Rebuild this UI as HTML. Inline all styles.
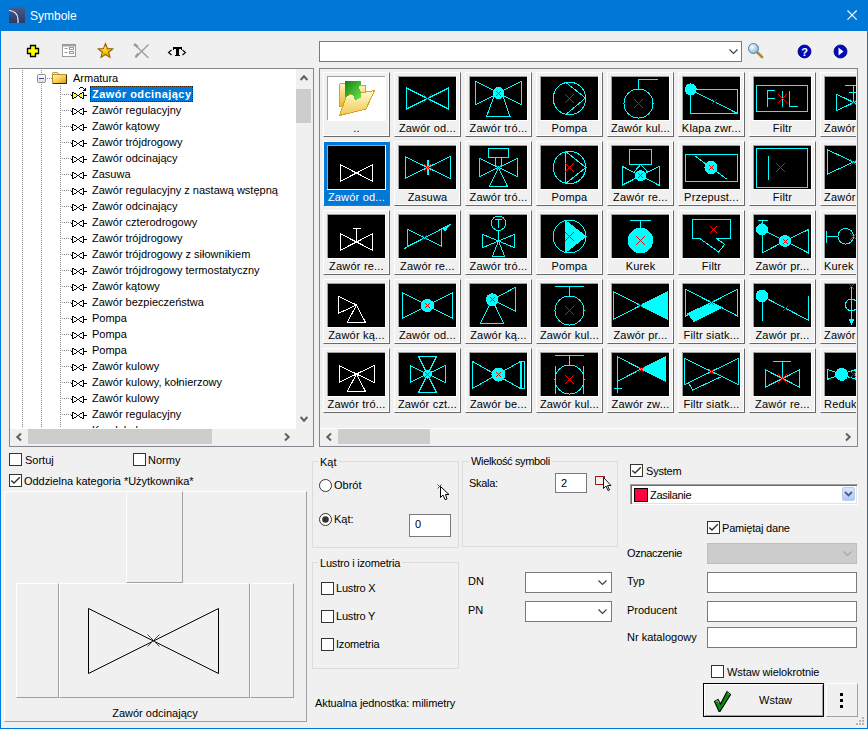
<!DOCTYPE html>
<html><head><meta charset="utf-8"><title>Symbole</title>
<style>
*{box-sizing:border-box;}
html,body{margin:0;padding:0;}
body{width:868px;height:729px;overflow:hidden;position:relative;background:#f0f0f0;font-family:"Liberation Sans", sans-serif;font-size:11px;color:#000;}
.a{position:absolute;}
.t{position:absolute;white-space:nowrap;line-height:13px;}
svg{position:absolute;overflow:visible;}
.cb{position:absolute;width:13px;height:13px;border:1px solid #333;background:#fff;}
.in{position:absolute;border:1px solid #7a7a7a;background:#fff;}
.grp{position:absolute;border:1px solid #dcdcdc;}
.gl{position:absolute;background:#f0f0f0;padding:0 2px;line-height:13px;white-space:nowrap;}
</style></head><body>

<div class="a" style="left:0;top:0;width:868px;height:31px;background:#0078d7;"></div>
<div class="a" style="left:0;top:0;width:1px;height:729px;background:#0078d7;"></div>
<div class="a" style="left:867px;top:0;width:1px;height:729px;background:#0078d7;"></div>
<div class="a" style="left:0;top:728px;width:868px;height:1px;background:#0078d7;"></div>
<svg style="left:9px;top:7px" width="16" height="16"><defs><linearGradient id="tig" x1="0" y1="0" x2="0" y2="1"><stop offset="0" stop-color="#4a5c8a"/><stop offset="1" stop-color="#2b3a66"/></linearGradient></defs>
<rect width="16" height="16" fill="url(#tig)"/><path d="M0,3.5 C5,3.5 9,7 9,12 L9,16" stroke="#fff" stroke-width="1.1" fill="none"/></svg>
<div class="t" style="left:30px;top:9px;font-size:12px;color:#fff;line-height:14px;">Symbole</div>
<svg style="left:847px;top:10px" width="11" height="11"><path d="M0.5,0.5 L9.7,9.7 M9.7,0.5 L0.5,9.7" stroke="#fff" stroke-width="1.1"/></svg>
<svg style="left:26px;top:44px" width="15" height="15"><path d="M4.5,1.5 h5 v3 h3 v5 h-3 v3 h-5 v-3 h-3 v-5 h3 z" fill="#ffff00" stroke="#000" stroke-width="1.3"/></svg>
<svg style="left:62px;top:44px" width="15" height="14"><rect x="0.5" y="0.5" width="13" height="12" fill="#fff" stroke="#9a9a9a"/><rect x="1" y="1" width="12" height="1.5" fill="#a0a0a0"/>
<path d="M2.5,4.5 h3 M2.5,8.5 h3" stroke="#9a9a9a"/><rect x="7.5" y="3.5" width="4" height="2" fill="none" stroke="#9a9a9a"/><rect x="7.5" y="7.5" width="4" height="2" fill="none" stroke="#9a9a9a"/></svg>
<svg style="left:97px;top:43px" width="17" height="16"><defs><linearGradient id="stg" x1="0" y1="0" x2="1" y2="1"><stop offset="0" stop-color="#ffe680"/><stop offset="0.5" stop-color="#f5c400"/><stop offset="1" stop-color="#e0a000"/></linearGradient></defs>
<path d="M8.50,0.60 L10.44,5.53 L15.73,5.85 L11.64,9.22 L12.97,14.35 L8.50,11.50 L4.03,14.35 L5.36,9.22 L1.27,5.85 L6.56,5.53 Z" fill="url(#stg)" stroke="#9a5a00" stroke-width="1.1"/><path d="M8.5,3 L7.5,6.5 L9.5,9" stroke="#fff8c0" stroke-width="1" fill="none" opacity="0.7"/></svg>
<svg style="left:133px;top:43px" width="17" height="16"><path d="M1.5,1.5 L15.5,15" stroke="#999" stroke-width="1.2"/><path d="M15.5,1.5 L2.5,14.5" stroke="#999" stroke-width="1.2"/><path d="M1,1 L5,4" stroke="#999" stroke-width="2.2"/><path d="M5.5,10.5 L2.5,14" stroke="#999" stroke-width="2.2"/></svg>
<svg style="left:166px;top:44px" width="22" height="14"><path d="M5.5,6 L2.5,8.5 L5.5,11" stroke="#000" stroke-width="1.1" fill="none"/><path d="M16.5,6 L19.5,8.5 L16.5,11" stroke="#000" stroke-width="1.1" fill="none"/><path d="M7,3h9v2h-9z M7,3h1v3h-1z M15,3h1v3h-1z M10,3h3v9h-3z M9,11h5v1h-5z" fill="#000" shape-rendering="crispEdges"/></svg>
<div class="a" style="left:9px;top:68px;width:305px;height:379px;border:1px solid #828790;background:#fff;"></div>
<svg style="left:0;top:0" width="868" height="729"><path d="M22,70h1v1h-1zM22,72h1v1h-1zM22,74h1v1h-1zM22,76h1v1h-1zM22,78h1v1h-1zM22,80h1v1h-1zM22,82h1v1h-1zM22,84h1v1h-1zM22,86h1v1h-1zM22,88h1v1h-1zM22,90h1v1h-1zM22,92h1v1h-1zM22,94h1v1h-1zM22,96h1v1h-1zM22,98h1v1h-1zM22,100h1v1h-1zM22,102h1v1h-1zM22,104h1v1h-1zM22,106h1v1h-1zM22,108h1v1h-1zM22,110h1v1h-1zM22,112h1v1h-1zM22,114h1v1h-1zM22,116h1v1h-1zM22,118h1v1h-1zM22,120h1v1h-1zM22,122h1v1h-1zM22,124h1v1h-1zM22,126h1v1h-1zM22,128h1v1h-1zM22,130h1v1h-1zM22,132h1v1h-1zM22,134h1v1h-1zM22,136h1v1h-1zM22,138h1v1h-1zM22,140h1v1h-1zM22,142h1v1h-1zM22,144h1v1h-1zM22,146h1v1h-1zM22,148h1v1h-1zM22,150h1v1h-1zM22,152h1v1h-1zM22,154h1v1h-1zM22,156h1v1h-1zM22,158h1v1h-1zM22,160h1v1h-1zM22,162h1v1h-1zM22,164h1v1h-1zM22,166h1v1h-1zM22,168h1v1h-1zM22,170h1v1h-1zM22,172h1v1h-1zM22,174h1v1h-1zM22,176h1v1h-1zM22,178h1v1h-1zM22,180h1v1h-1zM22,182h1v1h-1zM22,184h1v1h-1zM22,186h1v1h-1zM22,188h1v1h-1zM22,190h1v1h-1zM22,192h1v1h-1zM22,194h1v1h-1zM22,196h1v1h-1zM22,198h1v1h-1zM22,200h1v1h-1zM22,202h1v1h-1zM22,204h1v1h-1zM22,206h1v1h-1zM22,208h1v1h-1zM22,210h1v1h-1zM22,212h1v1h-1zM22,214h1v1h-1zM22,216h1v1h-1zM22,218h1v1h-1zM22,220h1v1h-1zM22,222h1v1h-1zM22,224h1v1h-1zM22,226h1v1h-1zM22,228h1v1h-1zM22,230h1v1h-1zM22,232h1v1h-1zM22,234h1v1h-1zM22,236h1v1h-1zM22,238h1v1h-1zM22,240h1v1h-1zM22,242h1v1h-1zM22,244h1v1h-1zM22,246h1v1h-1zM22,248h1v1h-1zM22,250h1v1h-1zM22,252h1v1h-1zM22,254h1v1h-1zM22,256h1v1h-1zM22,258h1v1h-1zM22,260h1v1h-1zM22,262h1v1h-1zM22,264h1v1h-1zM22,266h1v1h-1zM22,268h1v1h-1zM22,270h1v1h-1zM22,272h1v1h-1zM22,274h1v1h-1zM22,276h1v1h-1zM22,278h1v1h-1zM22,280h1v1h-1zM22,282h1v1h-1zM22,284h1v1h-1zM22,286h1v1h-1zM22,288h1v1h-1zM22,290h1v1h-1zM22,292h1v1h-1zM22,294h1v1h-1zM22,296h1v1h-1zM22,298h1v1h-1zM22,300h1v1h-1zM22,302h1v1h-1zM22,304h1v1h-1zM22,306h1v1h-1zM22,308h1v1h-1zM22,310h1v1h-1zM22,312h1v1h-1zM22,314h1v1h-1zM22,316h1v1h-1zM22,318h1v1h-1zM22,320h1v1h-1zM22,322h1v1h-1zM22,324h1v1h-1zM22,326h1v1h-1zM22,328h1v1h-1zM22,330h1v1h-1zM22,332h1v1h-1zM22,334h1v1h-1zM22,336h1v1h-1zM22,338h1v1h-1zM22,340h1v1h-1zM22,342h1v1h-1zM22,344h1v1h-1zM22,346h1v1h-1zM22,348h1v1h-1zM22,350h1v1h-1zM22,352h1v1h-1zM22,354h1v1h-1zM22,356h1v1h-1zM22,358h1v1h-1zM22,360h1v1h-1zM22,362h1v1h-1zM22,364h1v1h-1zM22,366h1v1h-1zM22,368h1v1h-1zM22,370h1v1h-1zM22,372h1v1h-1zM22,374h1v1h-1zM22,376h1v1h-1zM22,378h1v1h-1zM22,380h1v1h-1zM22,382h1v1h-1zM22,384h1v1h-1zM22,386h1v1h-1zM22,388h1v1h-1zM22,390h1v1h-1zM22,392h1v1h-1zM22,394h1v1h-1zM22,396h1v1h-1zM22,398h1v1h-1zM22,400h1v1h-1zM22,402h1v1h-1zM22,404h1v1h-1zM22,406h1v1h-1zM22,408h1v1h-1zM22,410h1v1h-1zM22,412h1v1h-1zM22,414h1v1h-1zM22,416h1v1h-1zM22,418h1v1h-1zM22,420h1v1h-1zM22,422h1v1h-1zM22,424h1v1h-1zM22,426h1v1h-1zM41,70h1v1h-1zM41,72h1v1h-1zM41,84h1v1h-1zM41,86h1v1h-1zM41,88h1v1h-1zM41,90h1v1h-1zM41,92h1v1h-1zM41,94h1v1h-1zM41,96h1v1h-1zM41,98h1v1h-1zM41,100h1v1h-1zM41,102h1v1h-1zM41,104h1v1h-1zM41,106h1v1h-1zM41,108h1v1h-1zM41,110h1v1h-1zM41,112h1v1h-1zM41,114h1v1h-1zM41,116h1v1h-1zM41,118h1v1h-1zM41,120h1v1h-1zM41,122h1v1h-1zM41,124h1v1h-1zM41,126h1v1h-1zM41,128h1v1h-1zM41,130h1v1h-1zM41,132h1v1h-1zM41,134h1v1h-1zM41,136h1v1h-1zM41,138h1v1h-1zM41,140h1v1h-1zM41,142h1v1h-1zM41,144h1v1h-1zM41,146h1v1h-1zM41,148h1v1h-1zM41,150h1v1h-1zM41,152h1v1h-1zM41,154h1v1h-1zM41,156h1v1h-1zM41,158h1v1h-1zM41,160h1v1h-1zM41,162h1v1h-1zM41,164h1v1h-1zM41,166h1v1h-1zM41,168h1v1h-1zM41,170h1v1h-1zM41,172h1v1h-1zM41,174h1v1h-1zM41,176h1v1h-1zM41,178h1v1h-1zM41,180h1v1h-1zM41,182h1v1h-1zM41,184h1v1h-1zM41,186h1v1h-1zM41,188h1v1h-1zM41,190h1v1h-1zM41,192h1v1h-1zM41,194h1v1h-1zM41,196h1v1h-1zM41,198h1v1h-1zM41,200h1v1h-1zM41,202h1v1h-1zM41,204h1v1h-1zM41,206h1v1h-1zM41,208h1v1h-1zM41,210h1v1h-1zM41,212h1v1h-1zM41,214h1v1h-1zM41,216h1v1h-1zM41,218h1v1h-1zM41,220h1v1h-1zM41,222h1v1h-1zM41,224h1v1h-1zM41,226h1v1h-1zM41,228h1v1h-1zM41,230h1v1h-1zM41,232h1v1h-1zM41,234h1v1h-1zM41,236h1v1h-1zM41,238h1v1h-1zM41,240h1v1h-1zM41,242h1v1h-1zM41,244h1v1h-1zM41,246h1v1h-1zM41,248h1v1h-1zM41,250h1v1h-1zM41,252h1v1h-1zM41,254h1v1h-1zM41,256h1v1h-1zM41,258h1v1h-1zM41,260h1v1h-1zM41,262h1v1h-1zM41,264h1v1h-1zM41,266h1v1h-1zM41,268h1v1h-1zM41,270h1v1h-1zM41,272h1v1h-1zM41,274h1v1h-1zM41,276h1v1h-1zM41,278h1v1h-1zM41,280h1v1h-1zM41,282h1v1h-1zM41,284h1v1h-1zM41,286h1v1h-1zM41,288h1v1h-1zM41,290h1v1h-1zM41,292h1v1h-1zM41,294h1v1h-1zM41,296h1v1h-1zM41,298h1v1h-1zM41,300h1v1h-1zM41,302h1v1h-1zM41,304h1v1h-1zM41,306h1v1h-1zM41,308h1v1h-1zM41,310h1v1h-1zM41,312h1v1h-1zM41,314h1v1h-1zM41,316h1v1h-1zM41,318h1v1h-1zM41,320h1v1h-1zM41,322h1v1h-1zM41,324h1v1h-1zM41,326h1v1h-1zM41,328h1v1h-1zM41,330h1v1h-1zM41,332h1v1h-1zM41,334h1v1h-1zM41,336h1v1h-1zM41,338h1v1h-1zM41,340h1v1h-1zM41,342h1v1h-1zM41,344h1v1h-1zM41,346h1v1h-1zM41,348h1v1h-1zM41,350h1v1h-1zM41,352h1v1h-1zM41,354h1v1h-1zM41,356h1v1h-1zM41,358h1v1h-1zM41,360h1v1h-1zM41,362h1v1h-1zM41,364h1v1h-1zM41,366h1v1h-1zM41,368h1v1h-1zM41,370h1v1h-1zM41,372h1v1h-1zM41,374h1v1h-1zM41,376h1v1h-1zM41,378h1v1h-1zM41,380h1v1h-1zM41,382h1v1h-1zM41,384h1v1h-1zM41,386h1v1h-1zM41,388h1v1h-1zM41,390h1v1h-1zM41,392h1v1h-1zM41,394h1v1h-1zM41,396h1v1h-1zM41,398h1v1h-1zM41,400h1v1h-1zM41,402h1v1h-1zM41,404h1v1h-1zM41,406h1v1h-1zM41,408h1v1h-1zM41,410h1v1h-1zM41,412h1v1h-1zM41,414h1v1h-1zM41,416h1v1h-1zM41,418h1v1h-1zM41,420h1v1h-1zM41,422h1v1h-1zM41,424h1v1h-1zM41,426h1v1h-1zM47,78h1v1h-1zM49,78h1v1h-1zM51,78h1v1h-1zM60,86h1v1h-1zM60,88h1v1h-1zM60,90h1v1h-1zM60,92h1v1h-1zM60,94h1v1h-1zM60,96h1v1h-1zM60,98h1v1h-1zM60,100h1v1h-1zM60,102h1v1h-1zM60,104h1v1h-1zM60,106h1v1h-1zM60,108h1v1h-1zM60,110h1v1h-1zM60,112h1v1h-1zM60,114h1v1h-1zM60,116h1v1h-1zM60,118h1v1h-1zM60,120h1v1h-1zM60,122h1v1h-1zM60,124h1v1h-1zM60,126h1v1h-1zM60,128h1v1h-1zM60,130h1v1h-1zM60,132h1v1h-1zM60,134h1v1h-1zM60,136h1v1h-1zM60,138h1v1h-1zM60,140h1v1h-1zM60,142h1v1h-1zM60,144h1v1h-1zM60,146h1v1h-1zM60,148h1v1h-1zM60,150h1v1h-1zM60,152h1v1h-1zM60,154h1v1h-1zM60,156h1v1h-1zM60,158h1v1h-1zM60,160h1v1h-1zM60,162h1v1h-1zM60,164h1v1h-1zM60,166h1v1h-1zM60,168h1v1h-1zM60,170h1v1h-1zM60,172h1v1h-1zM60,174h1v1h-1zM60,176h1v1h-1zM60,178h1v1h-1zM60,180h1v1h-1zM60,182h1v1h-1zM60,184h1v1h-1zM60,186h1v1h-1zM60,188h1v1h-1zM60,190h1v1h-1zM60,192h1v1h-1zM60,194h1v1h-1zM60,196h1v1h-1zM60,198h1v1h-1zM60,200h1v1h-1zM60,202h1v1h-1zM60,204h1v1h-1zM60,206h1v1h-1zM60,208h1v1h-1zM60,210h1v1h-1zM60,212h1v1h-1zM60,214h1v1h-1zM60,216h1v1h-1zM60,218h1v1h-1zM60,220h1v1h-1zM60,222h1v1h-1zM60,224h1v1h-1zM60,226h1v1h-1zM60,228h1v1h-1zM60,230h1v1h-1zM60,232h1v1h-1zM60,234h1v1h-1zM60,236h1v1h-1zM60,238h1v1h-1zM60,240h1v1h-1zM60,242h1v1h-1zM60,244h1v1h-1zM60,246h1v1h-1zM60,248h1v1h-1zM60,250h1v1h-1zM60,252h1v1h-1zM60,254h1v1h-1zM60,256h1v1h-1zM60,258h1v1h-1zM60,260h1v1h-1zM60,262h1v1h-1zM60,264h1v1h-1zM60,266h1v1h-1zM60,268h1v1h-1zM60,270h1v1h-1zM60,272h1v1h-1zM60,274h1v1h-1zM60,276h1v1h-1zM60,278h1v1h-1zM60,280h1v1h-1zM60,282h1v1h-1zM60,284h1v1h-1zM60,286h1v1h-1zM60,288h1v1h-1zM60,290h1v1h-1zM60,292h1v1h-1zM60,294h1v1h-1zM60,296h1v1h-1zM60,298h1v1h-1zM60,300h1v1h-1zM60,302h1v1h-1zM60,304h1v1h-1zM60,306h1v1h-1zM60,308h1v1h-1zM60,310h1v1h-1zM60,312h1v1h-1zM60,314h1v1h-1zM60,316h1v1h-1zM60,318h1v1h-1zM60,320h1v1h-1zM60,322h1v1h-1zM60,324h1v1h-1zM60,326h1v1h-1zM60,328h1v1h-1zM60,330h1v1h-1zM60,332h1v1h-1zM60,334h1v1h-1zM60,336h1v1h-1zM60,338h1v1h-1zM60,340h1v1h-1zM60,342h1v1h-1zM60,344h1v1h-1zM60,346h1v1h-1zM60,348h1v1h-1zM60,350h1v1h-1zM60,352h1v1h-1zM60,354h1v1h-1zM60,356h1v1h-1zM60,358h1v1h-1zM60,360h1v1h-1zM60,362h1v1h-1zM60,364h1v1h-1zM60,366h1v1h-1zM60,368h1v1h-1zM60,370h1v1h-1zM60,372h1v1h-1zM60,374h1v1h-1zM60,376h1v1h-1zM60,378h1v1h-1zM60,380h1v1h-1zM60,382h1v1h-1zM60,384h1v1h-1zM60,386h1v1h-1zM60,388h1v1h-1zM60,390h1v1h-1zM60,392h1v1h-1zM60,394h1v1h-1zM60,396h1v1h-1zM60,398h1v1h-1zM60,400h1v1h-1zM60,402h1v1h-1zM60,404h1v1h-1zM60,406h1v1h-1zM60,408h1v1h-1zM60,410h1v1h-1zM60,412h1v1h-1zM60,414h1v1h-1zM60,416h1v1h-1zM60,418h1v1h-1zM60,420h1v1h-1zM60,422h1v1h-1zM60,424h1v1h-1zM60,426h1v1h-1zM62,94h1v1h-1zM64,94h1v1h-1zM66,94h1v1h-1zM68,94h1v1h-1zM70,94h1v1h-1zM62,110h1v1h-1zM64,110h1v1h-1zM66,110h1v1h-1zM68,110h1v1h-1zM70,110h1v1h-1zM62,126h1v1h-1zM64,126h1v1h-1zM66,126h1v1h-1zM68,126h1v1h-1zM70,126h1v1h-1zM62,142h1v1h-1zM64,142h1v1h-1zM66,142h1v1h-1zM68,142h1v1h-1zM70,142h1v1h-1zM62,158h1v1h-1zM64,158h1v1h-1zM66,158h1v1h-1zM68,158h1v1h-1zM70,158h1v1h-1zM62,174h1v1h-1zM64,174h1v1h-1zM66,174h1v1h-1zM68,174h1v1h-1zM70,174h1v1h-1zM62,190h1v1h-1zM64,190h1v1h-1zM66,190h1v1h-1zM68,190h1v1h-1zM70,190h1v1h-1zM62,206h1v1h-1zM64,206h1v1h-1zM66,206h1v1h-1zM68,206h1v1h-1zM70,206h1v1h-1zM62,222h1v1h-1zM64,222h1v1h-1zM66,222h1v1h-1zM68,222h1v1h-1zM70,222h1v1h-1zM62,238h1v1h-1zM64,238h1v1h-1zM66,238h1v1h-1zM68,238h1v1h-1zM70,238h1v1h-1zM62,254h1v1h-1zM64,254h1v1h-1zM66,254h1v1h-1zM68,254h1v1h-1zM70,254h1v1h-1zM62,270h1v1h-1zM64,270h1v1h-1zM66,270h1v1h-1zM68,270h1v1h-1zM70,270h1v1h-1zM62,286h1v1h-1zM64,286h1v1h-1zM66,286h1v1h-1zM68,286h1v1h-1zM70,286h1v1h-1zM62,302h1v1h-1zM64,302h1v1h-1zM66,302h1v1h-1zM68,302h1v1h-1zM70,302h1v1h-1zM62,318h1v1h-1zM64,318h1v1h-1zM66,318h1v1h-1zM68,318h1v1h-1zM70,318h1v1h-1zM62,334h1v1h-1zM64,334h1v1h-1zM66,334h1v1h-1zM68,334h1v1h-1zM70,334h1v1h-1zM62,350h1v1h-1zM64,350h1v1h-1zM66,350h1v1h-1zM68,350h1v1h-1zM70,350h1v1h-1zM62,366h1v1h-1zM64,366h1v1h-1zM66,366h1v1h-1zM68,366h1v1h-1zM70,366h1v1h-1zM62,382h1v1h-1zM64,382h1v1h-1zM66,382h1v1h-1zM68,382h1v1h-1zM70,382h1v1h-1zM62,398h1v1h-1zM64,398h1v1h-1zM66,398h1v1h-1zM68,398h1v1h-1zM70,398h1v1h-1zM62,414h1v1h-1zM64,414h1v1h-1zM66,414h1v1h-1zM68,414h1v1h-1zM70,414h1v1h-1zM62,430h1v1h-1zM64,430h1v1h-1zM66,430h1v1h-1zM68,430h1v1h-1zM70,430h1v1h-1z" fill="#8a8a8a"/></svg>
<div class="a" style="left:10px;top:69px;width:286px;height:359px;overflow:hidden;">
<svg style="left:27px;top:5px" width="9" height="9"><defs><linearGradient id="exg" x1="0" y1="0" x2="0" y2="1"><stop offset="0" stop-color="#fff"/><stop offset="1" stop-color="#dcdcdc"/></linearGradient></defs><rect x="0.5" y="0.5" width="8" height="8" rx="1.2" fill="url(#exg)" stroke="#8e8f8f"/><path d="M2,4.5h5" stroke="#3c4fa0" stroke-width="1"/></svg>
<svg style="left:42px;top:3px" width="16" height="13"><defs><linearGradient id="fdg" x1="0" y1="0" x2="1" y2="1"><stop offset="0" stop-color="#fff6b8"/><stop offset="0.55" stop-color="#f3cc50"/><stop offset="1" stop-color="#d89a10"/></linearGradient></defs><path d="M0.5,2.5 V1 Q0.5,0.5 1,0.5 H5.5 L7,2.5" fill="#fbe9a0" stroke="#c8a040"/><rect x="0.5" y="2.5" width="14" height="9" fill="url(#fdg)" stroke="#b89030"/><path d="M1,11.5 H14.5 V3" stroke="#3a2800" fill="none"/></svg>
<div class="t" style="left:63px;top:1px;line-height:16px;">Armatura</div>
<div class="a" style="left:80px;top:17px;width:103px;height:16px;background:#0078d7;outline:1px dotted #402000;outline-offset:-1px;"></div>
<div class="t" style="left:82px;top:17px;line-height:16px;font-weight:bold;color:#fff;letter-spacing:0.45px;">Zawór odcinający</div>
<div class="t" style="left:82px;top:33px;line-height:16px;">Zawór regulacyjny</div>
<div class="t" style="left:82px;top:49px;line-height:16px;">Zawór kątowy</div>
<div class="t" style="left:82px;top:65px;line-height:16px;">Zawór trójdrogowy</div>
<div class="t" style="left:82px;top:81px;line-height:16px;">Zawór odcinający</div>
<div class="t" style="left:82px;top:97px;line-height:16px;">Zasuwa</div>
<div class="t" style="left:82px;top:113px;line-height:16px;">Zawór regulacyjny z nastawą wstępną</div>
<div class="t" style="left:82px;top:129px;line-height:16px;">Zawór odcinający</div>
<div class="t" style="left:82px;top:145px;line-height:16px;">Zawór czterodrogowy</div>
<div class="t" style="left:82px;top:161px;line-height:16px;">Zawór trójdrogowy</div>
<div class="t" style="left:82px;top:177px;line-height:16px;">Zawór trójdrogowy z siłownikiem</div>
<div class="t" style="left:82px;top:193px;line-height:16px;">Zawór trójdrogowy termostatyczny</div>
<div class="t" style="left:82px;top:209px;line-height:16px;">Zawór kątowy</div>
<div class="t" style="left:82px;top:225px;line-height:16px;">Zawór bezpieczeństwa</div>
<div class="t" style="left:82px;top:241px;line-height:16px;">Pompa</div>
<div class="t" style="left:82px;top:257px;line-height:16px;">Pompa</div>
<div class="t" style="left:82px;top:273px;line-height:16px;">Pompa</div>
<div class="t" style="left:82px;top:289px;line-height:16px;">Zawór kulowy</div>
<div class="t" style="left:82px;top:305px;line-height:16px;">Zawór kulowy, kołnierzowy</div>
<div class="t" style="left:82px;top:321px;line-height:16px;">Zawór kulowy</div>
<div class="t" style="left:82px;top:337px;line-height:16px;">Zawór regulacyjny</div>
<div class="t" style="left:82px;top:353px;line-height:16px;">Kurek kulowy</div>
<svg style="left:0;top:0" width="286" height="360" shape-rendering="crispEdges"><path d="M63,24h1v1h2v1h1v1h-1v1h-2v1h-1z M72,24h-1v1h-2v1h-1v1h1v1h2v1h1z" fill="#ffff00"/><path d="M64,26h1v1h-1z M70,26h1v1h-1z" fill="#ffffa0"/><path d="M61,26h1v1h-1zM62,23h1v7h-1zM63,23h1v1h-1zM63,29h1v1h-1zM64,24h2v1h-2zM66,25h1v1h-1zM67,26h2v1h-2zM66,27h1v1h-1zM64,28h2v1h-2zM69,25h1v1h-1zM70,24h2v1h-2zM69,27h1v1h-1zM70,28h2v1h-2zM73,23h1v7h-1zM72,23h1v1h-1zM72,29h1v1h-1zM74,26h3v1h-3z" fill="#000"/><path d="M69,19h1v1h-1z M70,18h3v1h-3z M73,19h1v1h-1z M75,19h1v3h-1z M74,20h1v2h-1z M73,21h1v1h-1z" fill="#000"/><path d="M61,42h1v1h-1zM62,39h1v7h-1zM63,39h1v1h-1zM63,45h1v1h-1zM64,40h2v1h-2zM66,41h1v1h-1zM67,42h2v1h-2zM66,43h1v1h-1zM64,44h2v1h-2zM69,41h1v1h-1zM70,40h2v1h-2zM69,43h1v1h-1zM70,44h2v1h-2zM73,39h1v7h-1zM72,39h1v1h-1zM72,45h1v1h-1zM74,42h3v1h-3z" fill="#000"/><path d="M61,58h1v1h-1zM62,55h1v7h-1zM63,55h1v1h-1zM63,61h1v1h-1zM64,56h2v1h-2zM66,57h1v1h-1zM67,58h2v1h-2zM66,59h1v1h-1zM64,60h2v1h-2zM69,57h1v1h-1zM70,56h2v1h-2zM69,59h1v1h-1zM70,60h2v1h-2zM73,55h1v7h-1zM72,55h1v1h-1zM72,61h1v1h-1zM74,58h3v1h-3z" fill="#000"/><path d="M61,74h1v1h-1zM62,71h1v7h-1zM63,71h1v1h-1zM63,77h1v1h-1zM64,72h2v1h-2zM66,73h1v1h-1zM67,74h2v1h-2zM66,75h1v1h-1zM64,76h2v1h-2zM69,73h1v1h-1zM70,72h2v1h-2zM69,75h1v1h-1zM70,76h2v1h-2zM73,71h1v7h-1zM72,71h1v1h-1zM72,77h1v1h-1zM74,74h3v1h-3z" fill="#000"/><path d="M61,90h1v1h-1zM62,87h1v7h-1zM63,87h1v1h-1zM63,93h1v1h-1zM64,88h2v1h-2zM66,89h1v1h-1zM67,90h2v1h-2zM66,91h1v1h-1zM64,92h2v1h-2zM69,89h1v1h-1zM70,88h2v1h-2zM69,91h1v1h-1zM70,92h2v1h-2zM73,87h1v7h-1zM72,87h1v1h-1zM72,93h1v1h-1zM74,90h3v1h-3z" fill="#000"/><path d="M61,106h1v1h-1zM62,103h1v7h-1zM63,103h1v1h-1zM63,109h1v1h-1zM64,104h2v1h-2zM66,105h1v1h-1zM67,106h2v1h-2zM66,107h1v1h-1zM64,108h2v1h-2zM69,105h1v1h-1zM70,104h2v1h-2zM69,107h1v1h-1zM70,108h2v1h-2zM73,103h1v7h-1zM72,103h1v1h-1zM72,109h1v1h-1zM74,106h3v1h-3z" fill="#000"/><path d="M61,122h1v1h-1zM62,119h1v7h-1zM63,119h1v1h-1zM63,125h1v1h-1zM64,120h2v1h-2zM66,121h1v1h-1zM67,122h2v1h-2zM66,123h1v1h-1zM64,124h2v1h-2zM69,121h1v1h-1zM70,120h2v1h-2zM69,123h1v1h-1zM70,124h2v1h-2zM73,119h1v7h-1zM72,119h1v1h-1zM72,125h1v1h-1zM74,122h3v1h-3z" fill="#000"/><path d="M61,138h1v1h-1zM62,135h1v7h-1zM63,135h1v1h-1zM63,141h1v1h-1zM64,136h2v1h-2zM66,137h1v1h-1zM67,138h2v1h-2zM66,139h1v1h-1zM64,140h2v1h-2zM69,137h1v1h-1zM70,136h2v1h-2zM69,139h1v1h-1zM70,140h2v1h-2zM73,135h1v7h-1zM72,135h1v1h-1zM72,141h1v1h-1zM74,138h3v1h-3z" fill="#000"/><path d="M61,154h1v1h-1zM62,151h1v7h-1zM63,151h1v1h-1zM63,157h1v1h-1zM64,152h2v1h-2zM66,153h1v1h-1zM67,154h2v1h-2zM66,155h1v1h-1zM64,156h2v1h-2zM69,153h1v1h-1zM70,152h2v1h-2zM69,155h1v1h-1zM70,156h2v1h-2zM73,151h1v7h-1zM72,151h1v1h-1zM72,157h1v1h-1zM74,154h3v1h-3z" fill="#000"/><path d="M61,170h1v1h-1zM62,167h1v7h-1zM63,167h1v1h-1zM63,173h1v1h-1zM64,168h2v1h-2zM66,169h1v1h-1zM67,170h2v1h-2zM66,171h1v1h-1zM64,172h2v1h-2zM69,169h1v1h-1zM70,168h2v1h-2zM69,171h1v1h-1zM70,172h2v1h-2zM73,167h1v7h-1zM72,167h1v1h-1zM72,173h1v1h-1zM74,170h3v1h-3z" fill="#000"/><path d="M61,186h1v1h-1zM62,183h1v7h-1zM63,183h1v1h-1zM63,189h1v1h-1zM64,184h2v1h-2zM66,185h1v1h-1zM67,186h2v1h-2zM66,187h1v1h-1zM64,188h2v1h-2zM69,185h1v1h-1zM70,184h2v1h-2zM69,187h1v1h-1zM70,188h2v1h-2zM73,183h1v7h-1zM72,183h1v1h-1zM72,189h1v1h-1zM74,186h3v1h-3z" fill="#000"/><path d="M61,202h1v1h-1zM62,199h1v7h-1zM63,199h1v1h-1zM63,205h1v1h-1zM64,200h2v1h-2zM66,201h1v1h-1zM67,202h2v1h-2zM66,203h1v1h-1zM64,204h2v1h-2zM69,201h1v1h-1zM70,200h2v1h-2zM69,203h1v1h-1zM70,204h2v1h-2zM73,199h1v7h-1zM72,199h1v1h-1zM72,205h1v1h-1zM74,202h3v1h-3z" fill="#000"/><path d="M61,218h1v1h-1zM62,215h1v7h-1zM63,215h1v1h-1zM63,221h1v1h-1zM64,216h2v1h-2zM66,217h1v1h-1zM67,218h2v1h-2zM66,219h1v1h-1zM64,220h2v1h-2zM69,217h1v1h-1zM70,216h2v1h-2zM69,219h1v1h-1zM70,220h2v1h-2zM73,215h1v7h-1zM72,215h1v1h-1zM72,221h1v1h-1zM74,218h3v1h-3z" fill="#000"/><path d="M61,234h1v1h-1zM62,231h1v7h-1zM63,231h1v1h-1zM63,237h1v1h-1zM64,232h2v1h-2zM66,233h1v1h-1zM67,234h2v1h-2zM66,235h1v1h-1zM64,236h2v1h-2zM69,233h1v1h-1zM70,232h2v1h-2zM69,235h1v1h-1zM70,236h2v1h-2zM73,231h1v7h-1zM72,231h1v1h-1zM72,237h1v1h-1zM74,234h3v1h-3z" fill="#000"/><path d="M61,250h1v1h-1zM62,247h1v7h-1zM63,247h1v1h-1zM63,253h1v1h-1zM64,248h2v1h-2zM66,249h1v1h-1zM67,250h2v1h-2zM66,251h1v1h-1zM64,252h2v1h-2zM69,249h1v1h-1zM70,248h2v1h-2zM69,251h1v1h-1zM70,252h2v1h-2zM73,247h1v7h-1zM72,247h1v1h-1zM72,253h1v1h-1zM74,250h3v1h-3z" fill="#000"/><path d="M61,266h1v1h-1zM62,263h1v7h-1zM63,263h1v1h-1zM63,269h1v1h-1zM64,264h2v1h-2zM66,265h1v1h-1zM67,266h2v1h-2zM66,267h1v1h-1zM64,268h2v1h-2zM69,265h1v1h-1zM70,264h2v1h-2zM69,267h1v1h-1zM70,268h2v1h-2zM73,263h1v7h-1zM72,263h1v1h-1zM72,269h1v1h-1zM74,266h3v1h-3z" fill="#000"/><path d="M61,282h1v1h-1zM62,279h1v7h-1zM63,279h1v1h-1zM63,285h1v1h-1zM64,280h2v1h-2zM66,281h1v1h-1zM67,282h2v1h-2zM66,283h1v1h-1zM64,284h2v1h-2zM69,281h1v1h-1zM70,280h2v1h-2zM69,283h1v1h-1zM70,284h2v1h-2zM73,279h1v7h-1zM72,279h1v1h-1zM72,285h1v1h-1zM74,282h3v1h-3z" fill="#000"/><path d="M61,298h1v1h-1zM62,295h1v7h-1zM63,295h1v1h-1zM63,301h1v1h-1zM64,296h2v1h-2zM66,297h1v1h-1zM67,298h2v1h-2zM66,299h1v1h-1zM64,300h2v1h-2zM69,297h1v1h-1zM70,296h2v1h-2zM69,299h1v1h-1zM70,300h2v1h-2zM73,295h1v7h-1zM72,295h1v1h-1zM72,301h1v1h-1zM74,298h3v1h-3z" fill="#000"/><path d="M61,314h1v1h-1zM62,311h1v7h-1zM63,311h1v1h-1zM63,317h1v1h-1zM64,312h2v1h-2zM66,313h1v1h-1zM67,314h2v1h-2zM66,315h1v1h-1zM64,316h2v1h-2zM69,313h1v1h-1zM70,312h2v1h-2zM69,315h1v1h-1zM70,316h2v1h-2zM73,311h1v7h-1zM72,311h1v1h-1zM72,317h1v1h-1zM74,314h3v1h-3z" fill="#000"/><path d="M61,330h1v1h-1zM62,327h1v7h-1zM63,327h1v1h-1zM63,333h1v1h-1zM64,328h2v1h-2zM66,329h1v1h-1zM67,330h2v1h-2zM66,331h1v1h-1zM64,332h2v1h-2zM69,329h1v1h-1zM70,328h2v1h-2zM69,331h1v1h-1zM70,332h2v1h-2zM73,327h1v7h-1zM72,327h1v1h-1zM72,333h1v1h-1zM74,330h3v1h-3z" fill="#000"/><path d="M61,346h1v1h-1zM62,343h1v7h-1zM63,343h1v1h-1zM63,349h1v1h-1zM64,344h2v1h-2zM66,345h1v1h-1zM67,346h2v1h-2zM66,347h1v1h-1zM64,348h2v1h-2zM69,345h1v1h-1zM70,344h2v1h-2zM69,347h1v1h-1zM70,348h2v1h-2zM73,343h1v7h-1zM72,343h1v1h-1zM72,349h1v1h-1zM74,346h3v1h-3z" fill="#000"/><path d="M61,362h1v1h-1zM62,359h1v7h-1zM63,359h1v1h-1zM63,365h1v1h-1zM64,360h2v1h-2zM66,361h1v1h-1zM67,362h2v1h-2zM66,363h1v1h-1zM64,364h2v1h-2zM69,361h1v1h-1zM70,360h2v1h-2zM69,363h1v1h-1zM70,364h2v1h-2zM73,359h1v7h-1zM72,359h1v1h-1zM72,365h1v1h-1zM74,362h3v1h-3z" fill="#000"/></svg>
</div>
<div class="a" style="left:296px;top:69px;width:17px;height:360px;background:#f0f0f0;"></div>
<div class="a" style="left:296px;top:89px;width:15px;height:34px;background:#cdcdcd;"></div>
<svg style="left:299px;top:74px" width="10" height="7"><path d="M1.6,6 L5,2.3 L8.4,6" stroke="#606060" stroke-width="2" fill="none"/></svg>
<svg style="left:299px;top:416px" width="10" height="7"><path d="M1.6,1 L5,4.7 L8.4,1" stroke="#606060" stroke-width="2" fill="none"/></svg>
<div class="a" style="left:10px;top:429px;width:303px;height:17px;background:#f0f0f0;"></div>
<div class="a" style="left:28px;top:429px;width:184px;height:15px;background:#cdcdcd;"></div>
<svg style="left:15px;top:432px" width="7" height="10"><path d="M6,1.6 L2.3,5 L6,8.4" stroke="#606060" stroke-width="2" fill="none"/></svg>
<svg style="left:284px;top:432px" width="7" height="10"><path d="M1,1.6 L4.7,5 L1,8.4" stroke="#606060" stroke-width="2" fill="none"/></svg>
<div class="a" style="left:319px;top:68px;width:539px;height:379px;border:1px solid #828790;background:#f0f0f0;"></div>
<div class="a" style="left:320px;top:69px;width:536px;height:359px;overflow:hidden;">
<div class="a" style="left:3px;top:3px;width:67px;height:65px;border-top:1px solid #fff;border-left:1px solid #fff;border-right:1px solid #696969;border-bottom:1px solid #696969;box-shadow:inset -1px -1px 0 #fff;"></div>
<svg style="left:7px;top:7px" width="59" height="45"><rect x="0" y="0" width="59" height="45" fill="#fff"/><rect x="0" y="0" width="58" height="44" fill="#a0a0a0"/><rect x="1" y="1" width="57" height="43" fill="#fff"/><svg x="1" y="1" width="57" height="43" viewBox="1 1 57 43" style="position:static" shape-rendering="crispEdges"><defs><linearGradient id="fog" x1="0" y1="0" x2="0" y2="1"><stop offset="0" stop-color="#fff6c0"/><stop offset="1" stop-color="#e8b830"/></linearGradient><linearGradient id="arg" x1="0" y1="0" x2="1" y2="1"><stop offset="0" stop-color="#108010"/><stop offset="1" stop-color="#70e050"/></linearGradient><linearGradient id="fog2" x1="0" y1="0" x2="0" y2="1"><stop offset="0" stop-color="#fffbd0"/><stop offset="1" stop-color="#f0c850"/></linearGradient></defs><path d="M12.5,30 V9 Q12.5,7.5 14,7.5 H20 L22,9.5 H37 Q38.5,9.5 38.5,11 V30 Z" fill="url(#fog)" stroke="#d8a020"/><path d="M12.5,39.5 L19.5,19.5 L47.5,14.5 L39,33 Z" fill="url(#fog2)" stroke="#d8a020"/><path d="M17.5,4.5 H33.5 V9 L31.5,11 L33.5,14.5 V22 L28,24.5 L26,19 L23,17.5 L20,20.5 L17.5,21.5 Z" fill="url(#arg)"/></svg></svg>
<div class="t" style="left:3px;top:53px;width:67px;text-align:center;color:#000;overflow:hidden;letter-spacing:0.2px;">..</div>
<div class="a" style="left:74px;top:3px;width:67px;height:65px;border-top:1px solid #fff;border-left:1px solid #fff;border-right:1px solid #696969;border-bottom:1px solid #696969;box-shadow:inset -1px -1px 0 #fff;"></div>
<svg style="left:78px;top:7px" width="59" height="45"><rect x="0" y="0" width="59" height="45" fill="#fff"/><rect x="0" y="0" width="58" height="44" fill="#a0a0a0"/><rect x="1" y="1" width="57" height="43" fill="#000"/><svg x="1" y="1" width="57" height="43" viewBox="1 1 57 43" style="position:static" shape-rendering="crispEdges"><path d="M8.5,12.0 L50.5,33.0 L50.5,12.0 L8.5,33.0 Z" fill="none" stroke="#00ffff"/><path d="M25,18h1v1h-1z M25,26h1v1h-1zM26,19h1v1h-1z M26,25h1v1h-1zM27,20h1v1h-1z M27,24h1v1h-1zM28,21h1v1h-1z M28,23h1v1h-1zM29,22h1v1h-1z M29,22h1v1h-1zM30,23h1v1h-1z M30,21h1v1h-1zM31,24h1v1h-1z M31,20h1v1h-1zM32,25h1v1h-1z M32,19h1v1h-1zM33,26h1v1h-1z M33,18h1v1h-1z" fill="#ff0000"/></svg></svg>
<div class="t" style="left:74px;top:53px;width:67px;text-align:center;color:#000;overflow:hidden;letter-spacing:0.2px;">Zawór od...</div>
<div class="a" style="left:145px;top:3px;width:67px;height:65px;border-top:1px solid #fff;border-left:1px solid #fff;border-right:1px solid #696969;border-bottom:1px solid #696969;box-shadow:inset -1px -1px 0 #fff;"></div>
<svg style="left:149px;top:7px" width="59" height="45"><rect x="0" y="0" width="59" height="45" fill="#fff"/><rect x="0" y="0" width="58" height="44" fill="#a0a0a0"/><rect x="1" y="1" width="57" height="43" fill="#000"/><svg x="1" y="1" width="57" height="43" viewBox="1 1 57 43" style="position:static" shape-rendering="crispEdges"><path d="M6.5,5.199999999999999 L52.5,28.8 L52.5,5.199999999999999 L6.5,28.8 Z" fill="none" stroke="#00ffff"/><path d="M25.5,19 L17.5,40.5 L41,40.5 L33.5,19" fill="none" stroke="#00ffff"/><circle cx="29.5" cy="17" r="5.5" fill="#00ffff" stroke="#00ffff"/><path d="M27,15h1v1h-1z M27,19h1v1h-1zM28,16h1v1h-1z M28,18h1v1h-1zM29,17h1v1h-1z M29,17h1v1h-1zM30,18h1v1h-1z M30,16h1v1h-1zM31,19h1v1h-1z M31,15h1v1h-1z" fill="#ff0000"/></svg></svg>
<div class="t" style="left:145px;top:53px;width:67px;text-align:center;color:#000;overflow:hidden;letter-spacing:0.2px;">Zawór tró...</div>
<div class="a" style="left:216px;top:3px;width:67px;height:65px;border-top:1px solid #fff;border-left:1px solid #fff;border-right:1px solid #696969;border-bottom:1px solid #696969;box-shadow:inset -1px -1px 0 #fff;"></div>
<svg style="left:220px;top:7px" width="59" height="45"><rect x="0" y="0" width="59" height="45" fill="#fff"/><rect x="0" y="0" width="58" height="44" fill="#a0a0a0"/><rect x="1" y="1" width="57" height="43" fill="#000"/><svg x="1" y="1" width="57" height="43" viewBox="1 1 57 43" style="position:static" shape-rendering="crispEdges"><circle cx="29.5" cy="22.5" r="16.3" fill="none" stroke="#00ffff"/><path d="M25.6,6.3 L45.5,22 L25.9,38.5" fill="none" stroke="#00ffff"/><path d="M25,18h1v1h-1z M25,26h1v1h-1zM26,19h1v1h-1z M26,25h1v1h-1zM27,20h1v1h-1z M27,24h1v1h-1zM28,21h1v1h-1z M28,23h1v1h-1zM29,22h1v1h-1z M29,22h1v1h-1zM30,23h1v1h-1z M30,21h1v1h-1zM31,24h1v1h-1z M31,20h1v1h-1zM32,25h1v1h-1z M32,19h1v1h-1zM33,26h1v1h-1z M33,18h1v1h-1z" fill="#ff0000"/></svg></svg>
<div class="t" style="left:216px;top:53px;width:67px;text-align:center;color:#000;overflow:hidden;letter-spacing:0.2px;">Pompa</div>
<div class="a" style="left:287px;top:3px;width:67px;height:65px;border-top:1px solid #fff;border-left:1px solid #fff;border-right:1px solid #696969;border-bottom:1px solid #696969;box-shadow:inset -1px -1px 0 #fff;"></div>
<svg style="left:291px;top:7px" width="59" height="45"><rect x="0" y="0" width="59" height="45" fill="#fff"/><rect x="0" y="0" width="58" height="44" fill="#a0a0a0"/><rect x="1" y="1" width="57" height="43" fill="#000"/><svg x="1" y="1" width="57" height="43" viewBox="1 1 57 43" style="position:static" shape-rendering="crispEdges"><circle cx="27.5" cy="27.5" r="14.5" fill="none" stroke="#00ffff"/><path d="M27.5,13 L27.5,3.5 L47,3.5" fill="none" stroke="#00ffff"/><path d="M23,23h1v1h-1z M23,31h1v1h-1zM24,24h1v1h-1z M24,30h1v1h-1zM25,25h1v1h-1z M25,29h1v1h-1zM26,26h1v1h-1z M26,28h1v1h-1zM27,27h1v1h-1z M27,27h1v1h-1zM28,28h1v1h-1z M28,26h1v1h-1zM29,29h1v1h-1z M29,25h1v1h-1zM30,30h1v1h-1z M30,24h1v1h-1zM31,31h1v1h-1z M31,23h1v1h-1z" fill="#ff0000"/></svg></svg>
<div class="t" style="left:287px;top:53px;width:67px;text-align:center;color:#000;overflow:hidden;letter-spacing:0.2px;">Zawór kul...</div>
<div class="a" style="left:358px;top:3px;width:67px;height:65px;border-top:1px solid #fff;border-left:1px solid #fff;border-right:1px solid #696969;border-bottom:1px solid #696969;box-shadow:inset -1px -1px 0 #fff;"></div>
<svg style="left:362px;top:7px" width="59" height="45"><rect x="0" y="0" width="59" height="45" fill="#fff"/><rect x="0" y="0" width="58" height="44" fill="#a0a0a0"/><rect x="1" y="1" width="57" height="43" fill="#000"/><svg x="1" y="1" width="57" height="43" viewBox="1 1 57 43" style="position:static" shape-rendering="crispEdges"><rect x="8.5" y="13.5" width="47" height="24" fill="none" stroke="#00ffff"/><path d="M8.5,13.5 L55.5,37.5" fill="none" stroke="#00ffff"/><circle cx="8.7" cy="13.4" r="5.5" fill="#00ffff" stroke="#00ffff"/><path d="M30,23h1v1h-1z M30,27h1v1h-1zM31,24h1v1h-1z M31,26h1v1h-1zM32,25h1v1h-1z M32,25h1v1h-1zM33,26h1v1h-1z M33,24h1v1h-1zM34,27h1v1h-1z M34,23h1v1h-1z" fill="#ff0000"/></svg></svg>
<div class="t" style="left:358px;top:53px;width:67px;text-align:center;color:#000;overflow:hidden;letter-spacing:0.2px;">Klapa zwr...</div>
<div class="a" style="left:429px;top:3px;width:67px;height:65px;border-top:1px solid #fff;border-left:1px solid #fff;border-right:1px solid #696969;border-bottom:1px solid #696969;box-shadow:inset -1px -1px 0 #fff;"></div>
<svg style="left:433px;top:7px" width="59" height="45"><rect x="0" y="0" width="59" height="45" fill="#fff"/><rect x="0" y="0" width="58" height="44" fill="#a0a0a0"/><rect x="1" y="1" width="57" height="43" fill="#000"/><svg x="1" y="1" width="57" height="43" viewBox="1 1 57 43" style="position:static" shape-rendering="crispEdges"><rect x="3.5" y="9.5" width="51" height="26" fill="none" stroke="#00ffff"/><path d="M22,14.5 L14.5,14.5 L14.5,30.5" fill="none" stroke="#00ffff"/><path d="M14.5,22.5 L22,22.5" fill="none" stroke="#00ffff"/><path d="M29.5,14.5 L29.5,30.5" fill="none" stroke="#00ffff"/><path d="M36.5,14.5 L36.5,30.5 L45,30.5" fill="none" stroke="#00ffff"/><path d="M25,18h1v1h-1z M25,26h1v1h-1zM26,19h1v1h-1z M26,25h1v1h-1zM27,20h1v1h-1z M27,24h1v1h-1zM28,21h1v1h-1z M28,23h1v1h-1zM29,22h1v1h-1z M29,22h1v1h-1zM30,23h1v1h-1z M30,21h1v1h-1zM31,24h1v1h-1z M31,20h1v1h-1zM32,25h1v1h-1z M32,19h1v1h-1zM33,26h1v1h-1z M33,18h1v1h-1z" fill="#ff0000"/></svg></svg>
<div class="t" style="left:429px;top:53px;width:67px;text-align:center;color:#000;overflow:hidden;letter-spacing:0.2px;">Filtr</div>
<div class="a" style="left:500px;top:3px;width:67px;height:65px;border-top:1px solid #fff;border-left:1px solid #fff;border-right:1px solid #696969;border-bottom:1px solid #696969;box-shadow:inset -1px -1px 0 #fff;"></div>
<svg style="left:504px;top:7px" width="59" height="45"><rect x="0" y="0" width="59" height="45" fill="#fff"/><rect x="0" y="0" width="58" height="44" fill="#a0a0a0"/><rect x="1" y="1" width="57" height="43" fill="#000"/><svg x="1" y="1" width="57" height="43" viewBox="1 1 57 43" style="position:static" shape-rendering="crispEdges"><path d="M12.5,18.1 L46.5,34.9 L46.5,18.1 L12.5,34.9 Z" fill="none" stroke="#00ffff"/><path d="M29.5,26.5 L29.5,9.5" fill="none" stroke="#00ffff"/><path d="M20.5,9.5 L40,9.5" fill="none" stroke="#00ffff"/><path d="M24.5,16.5 L40,16.5" fill="none" stroke="#00ffff"/><path d="M26,23h1v1h-1z M26,29h1v1h-1zM27,24h1v1h-1z M27,28h1v1h-1zM28,25h1v1h-1z M28,27h1v1h-1zM29,26h1v1h-1z M29,26h1v1h-1zM30,27h1v1h-1z M30,25h1v1h-1zM31,28h1v1h-1z M31,24h1v1h-1zM32,29h1v1h-1z M32,23h1v1h-1z" fill="#ff0000"/></svg></svg>
<div class="t" style="left:504px;top:53px;color:#000;letter-spacing:0.2px;">Zawór kulowy</div>
<div class="a" style="left:3px;top:72px;width:67px;height:65px;border-top:1px solid #fff;border-left:1px solid #fff;border-right:1px solid #696969;border-bottom:1px solid #696969;box-shadow:inset -1px -1px 0 #fff;"></div>
<div class="a" style="left:4px;top:73px;width:65px;height:63px;background:#0078d7;"></div>
<svg style="left:7px;top:76px" width="59" height="45"><rect x="0" y="0" width="59" height="45" fill="#fff"/><rect x="0" y="0" width="58" height="44" fill="#a0a0a0"/><rect x="1" y="1" width="57" height="43" fill="#000"/><svg x="1" y="1" width="57" height="43" viewBox="1 1 57 43" style="position:static" shape-rendering="crispEdges"><path d="M13.5,19.8 L45.5,36.2 L45.5,19.8 L13.5,36.2 Z" fill="none" stroke="#ffffff"/></svg></svg>
<div class="t" style="left:3px;top:122px;width:67px;text-align:center;color:#fff;overflow:hidden;letter-spacing:0.2px;">Zawór od...</div>
<div class="a" style="left:74px;top:72px;width:67px;height:65px;border-top:1px solid #fff;border-left:1px solid #fff;border-right:1px solid #696969;border-bottom:1px solid #696969;box-shadow:inset -1px -1px 0 #fff;"></div>
<svg style="left:78px;top:76px" width="59" height="45"><rect x="0" y="0" width="59" height="45" fill="#fff"/><rect x="0" y="0" width="58" height="44" fill="#a0a0a0"/><rect x="1" y="1" width="57" height="43" fill="#000"/><svg x="1" y="1" width="57" height="43" viewBox="1 1 57 43" style="position:static" shape-rendering="crispEdges"><path d="M7.0,11.5 L52.0,33.5 L52.0,11.5 L7.0,33.5 Z" fill="none" stroke="#00ffff"/><rect x="28.5" y="15" width="2" height="15" fill="#00ffff"/><path d="M26,19h1v1h-1z M26,25h1v1h-1zM27,20h1v1h-1z M27,24h1v1h-1zM28,21h1v1h-1z M28,23h1v1h-1zM29,22h1v1h-1z M29,22h1v1h-1zM30,23h1v1h-1z M30,21h1v1h-1zM31,24h1v1h-1z M31,20h1v1h-1zM32,25h1v1h-1z M32,19h1v1h-1z" fill="#ff0000"/></svg></svg>
<div class="t" style="left:74px;top:122px;width:67px;text-align:center;color:#000;overflow:hidden;letter-spacing:0.2px;">Zasuwa</div>
<div class="a" style="left:145px;top:72px;width:67px;height:65px;border-top:1px solid #fff;border-left:1px solid #fff;border-right:1px solid #696969;border-bottom:1px solid #696969;box-shadow:inset -1px -1px 0 #fff;"></div>
<svg style="left:149px;top:76px" width="59" height="45"><rect x="0" y="0" width="59" height="45" fill="#fff"/><rect x="0" y="0" width="58" height="44" fill="#a0a0a0"/><rect x="1" y="1" width="57" height="43" fill="#000"/><svg x="1" y="1" width="57" height="43" viewBox="1 1 57 43" style="position:static" shape-rendering="crispEdges"><path d="M10.3,13.3 L48.7,31.7 L48.7,13.3 L10.3,31.7 Z" fill="none" stroke="#00ffff"/><path d="M29.5,22.5 L20.5,41.5 L38.5,41.5 Z" fill="none" stroke="#00ffff"/><rect x="19.5" y="3" width="20" height="9.5" fill="none" stroke="#00ffff"/><path d="M26.5,12.5 L26.5,20.5" fill="none" stroke="#00ffff"/><path d="M32.5,12.5 L32.5,20.5" fill="none" stroke="#00ffff"/><path d="M27,20h1v1h-1z M27,24h1v1h-1zM28,21h1v1h-1z M28,23h1v1h-1zM29,22h1v1h-1z M29,22h1v1h-1zM30,23h1v1h-1z M30,21h1v1h-1zM31,24h1v1h-1z M31,20h1v1h-1z" fill="#ff0000"/></svg></svg>
<div class="t" style="left:145px;top:122px;width:67px;text-align:center;color:#000;overflow:hidden;letter-spacing:0.2px;">Zawór tró...</div>
<div class="a" style="left:216px;top:72px;width:67px;height:65px;border-top:1px solid #fff;border-left:1px solid #fff;border-right:1px solid #696969;border-bottom:1px solid #696969;box-shadow:inset -1px -1px 0 #fff;"></div>
<svg style="left:220px;top:76px" width="59" height="45"><rect x="0" y="0" width="59" height="45" fill="#fff"/><rect x="0" y="0" width="58" height="44" fill="#a0a0a0"/><rect x="1" y="1" width="57" height="43" fill="#000"/><svg x="1" y="1" width="57" height="43" viewBox="1 1 57 43" style="position:static" shape-rendering="crispEdges"><circle cx="29.5" cy="22.5" r="16.2" fill="none" stroke="#00ffff"/><path d="M25.7,6.5 L45.8,22.5 L25.7,38.5 Z" fill="none" stroke="#00ffff"/><path d="M25,18h1v1h-1z M25,26h1v1h-1zM26,19h1v1h-1z M26,25h1v1h-1zM27,20h1v1h-1z M27,24h1v1h-1zM28,21h1v1h-1z M28,23h1v1h-1zM29,22h1v1h-1z M29,22h1v1h-1zM30,23h1v1h-1z M30,21h1v1h-1zM31,24h1v1h-1z M31,20h1v1h-1zM32,25h1v1h-1z M32,19h1v1h-1zM33,26h1v1h-1z M33,18h1v1h-1z" fill="#ff0000"/></svg></svg>
<div class="t" style="left:216px;top:122px;width:67px;text-align:center;color:#000;overflow:hidden;letter-spacing:0.2px;">Pompa</div>
<div class="a" style="left:287px;top:72px;width:67px;height:65px;border-top:1px solid #fff;border-left:1px solid #fff;border-right:1px solid #696969;border-bottom:1px solid #696969;box-shadow:inset -1px -1px 0 #fff;"></div>
<svg style="left:291px;top:76px" width="59" height="45"><rect x="0" y="0" width="59" height="45" fill="#fff"/><rect x="0" y="0" width="58" height="44" fill="#a0a0a0"/><rect x="1" y="1" width="57" height="43" fill="#000"/><svg x="1" y="1" width="57" height="43" viewBox="1 1 57 43" style="position:static" shape-rendering="crispEdges"><rect x="18.5" y="4.5" width="22" height="15" fill="none" stroke="#00ffff"/><path d="M22.7,27.5 L29.6,19.5 L37.1,27.5" fill="none" stroke="#00ffff"/><path d="M11.100000000000001,21.3 L48.1,40.3 L48.1,21.3 L11.100000000000001,40.3 Z" fill="none" stroke="#00ffff"/><circle cx="29.6" cy="30.8" r="5" fill="#00ffff" stroke="#00ffff"/><path d="M27,28h1v1h-1z M27,32h1v1h-1zM28,29h1v1h-1z M28,31h1v1h-1zM29,30h1v1h-1z M29,30h1v1h-1zM30,31h1v1h-1z M30,29h1v1h-1zM31,32h1v1h-1z M31,28h1v1h-1z" fill="#ff0000"/></svg></svg>
<div class="t" style="left:287px;top:122px;width:67px;text-align:center;color:#000;overflow:hidden;letter-spacing:0.2px;">Zawór re...</div>
<div class="a" style="left:358px;top:72px;width:67px;height:65px;border-top:1px solid #fff;border-left:1px solid #fff;border-right:1px solid #696969;border-bottom:1px solid #696969;box-shadow:inset -1px -1px 0 #fff;"></div>
<svg style="left:362px;top:76px" width="59" height="45"><rect x="0" y="0" width="59" height="45" fill="#fff"/><rect x="0" y="0" width="58" height="44" fill="#a0a0a0"/><rect x="1" y="1" width="57" height="43" fill="#000"/><svg x="1" y="1" width="57" height="43" viewBox="1 1 57 43" style="position:static" shape-rendering="crispEdges"><rect x="3.5" y="9.5" width="52" height="26.5" fill="none" stroke="#00ffff"/><path d="M13,11 L44.6,34" fill="none" stroke="#00ffff"/><circle cx="29" cy="22.5" r="6" fill="#00ffff" stroke="#00ffff"/><path d="M27,20h1v1h-1z M27,24h1v1h-1zM28,21h1v1h-1z M28,23h1v1h-1zM29,22h1v1h-1z M29,22h1v1h-1zM30,23h1v1h-1z M30,21h1v1h-1zM31,24h1v1h-1z M31,20h1v1h-1z" fill="#ff0000"/></svg></svg>
<div class="t" style="left:358px;top:122px;width:67px;text-align:center;color:#000;overflow:hidden;letter-spacing:0.2px;">Przepust...</div>
<div class="a" style="left:429px;top:72px;width:67px;height:65px;border-top:1px solid #fff;border-left:1px solid #fff;border-right:1px solid #696969;border-bottom:1px solid #696969;box-shadow:inset -1px -1px 0 #fff;"></div>
<svg style="left:433px;top:76px" width="59" height="45"><rect x="0" y="0" width="59" height="45" fill="#fff"/><rect x="0" y="0" width="58" height="44" fill="#a0a0a0"/><rect x="1" y="1" width="57" height="43" fill="#000"/><svg x="1" y="1" width="57" height="43" viewBox="1 1 57 43" style="position:static" shape-rendering="crispEdges"><rect x="3.5" y="3.5" width="50.5" height="39" fill="none" stroke="#00ffff"/><path d="M15.5,11 L15.5,35" fill="none" stroke="#00ffff"/><path d="M23,18h1v1h-1z M23,26h1v1h-1zM24,19h1v1h-1z M24,25h1v1h-1zM25,20h1v1h-1z M25,24h1v1h-1zM26,21h1v1h-1z M26,23h1v1h-1zM27,22h1v1h-1z M27,22h1v1h-1zM28,23h1v1h-1z M28,21h1v1h-1zM29,24h1v1h-1z M29,20h1v1h-1zM30,25h1v1h-1z M30,19h1v1h-1zM31,26h1v1h-1z M31,18h1v1h-1z" fill="#ff0000"/></svg></svg>
<div class="t" style="left:429px;top:122px;width:67px;text-align:center;color:#000;overflow:hidden;letter-spacing:0.2px;">Filtr</div>
<div class="a" style="left:500px;top:72px;width:67px;height:65px;border-top:1px solid #fff;border-left:1px solid #fff;border-right:1px solid #696969;border-bottom:1px solid #696969;box-shadow:inset -1px -1px 0 #fff;"></div>
<svg style="left:504px;top:76px" width="59" height="45"><rect x="0" y="0" width="59" height="45" fill="#fff"/><rect x="0" y="0" width="58" height="44" fill="#a0a0a0"/><rect x="1" y="1" width="57" height="43" fill="#000"/><svg x="1" y="1" width="57" height="43" viewBox="1 1 57 43" style="position:static" shape-rendering="crispEdges"><path d="M3.0,4.6 L56.0,29.4 L56.0,4.6 L3.0,29.4 Z" fill="none" stroke="#00ffff"/><path d="M26,14h1v1h-1z M26,20h1v1h-1zM27,15h1v1h-1z M27,19h1v1h-1zM28,16h1v1h-1z M28,18h1v1h-1zM29,17h1v1h-1z M29,17h1v1h-1zM30,18h1v1h-1z M30,16h1v1h-1zM31,19h1v1h-1z M31,15h1v1h-1zM32,20h1v1h-1z M32,14h1v1h-1z" fill="#ff0000"/></svg></svg>
<div class="t" style="left:504px;top:122px;color:#000;letter-spacing:0.2px;">Zawór zwrotny</div>
<div class="a" style="left:3px;top:141px;width:67px;height:65px;border-top:1px solid #fff;border-left:1px solid #fff;border-right:1px solid #696969;border-bottom:1px solid #696969;box-shadow:inset -1px -1px 0 #fff;"></div>
<svg style="left:7px;top:145px" width="59" height="45"><rect x="0" y="0" width="59" height="45" fill="#fff"/><rect x="0" y="0" width="58" height="44" fill="#a0a0a0"/><rect x="1" y="1" width="57" height="43" fill="#000"/><svg x="1" y="1" width="57" height="43" viewBox="1 1 57 43" style="position:static" shape-rendering="crispEdges"><path d="M13.2,19.7 L45.8,36.3 L45.8,19.7 L13.2,36.3 Z" fill="none" stroke="#ffffff"/><path d="M29.5,28 L29.5,14.8" fill="none" stroke="#ffffff"/><path d="M25.5,14.8 L33.5,14.8" fill="none" stroke="#ffffff"/></svg></svg>
<div class="t" style="left:3px;top:191px;width:67px;text-align:center;color:#000;overflow:hidden;letter-spacing:0.2px;">Zawór re...</div>
<div class="a" style="left:74px;top:141px;width:67px;height:65px;border-top:1px solid #fff;border-left:1px solid #fff;border-right:1px solid #696969;border-bottom:1px solid #696969;box-shadow:inset -1px -1px 0 #fff;"></div>
<svg style="left:78px;top:145px" width="59" height="45"><rect x="0" y="0" width="59" height="45" fill="#fff"/><rect x="0" y="0" width="58" height="44" fill="#a0a0a0"/><rect x="1" y="1" width="57" height="43" fill="#000"/><svg x="1" y="1" width="57" height="43" viewBox="1 1 57 43" style="position:static" shape-rendering="crispEdges"><path d="M9.7,15.4 L43.3,32.2 L43.3,15.4 L9.7,32.2 Z" fill="none" stroke="#00ffff"/><path d="M6.5,34.5 L52.6,10.2" fill="none" stroke="#00ffff"/><path d="M45,14.5 L52.6,10.2 L47,16.5 Z" fill="#00ffff" stroke="#00ffff"/><path d="M24,21h1v1h-1z M24,25h1v1h-1zM25,22h1v1h-1z M25,24h1v1h-1zM26,23h1v1h-1z M26,23h1v1h-1zM27,24h1v1h-1z M27,22h1v1h-1zM28,25h1v1h-1z M28,21h1v1h-1z" fill="#ff0000"/></svg></svg>
<div class="t" style="left:74px;top:191px;width:67px;text-align:center;color:#000;overflow:hidden;letter-spacing:0.2px;">Zawór re...</div>
<div class="a" style="left:145px;top:141px;width:67px;height:65px;border-top:1px solid #fff;border-left:1px solid #fff;border-right:1px solid #696969;border-bottom:1px solid #696969;box-shadow:inset -1px -1px 0 #fff;"></div>
<svg style="left:149px;top:145px" width="59" height="45"><rect x="0" y="0" width="59" height="45" fill="#fff"/><rect x="0" y="0" width="58" height="44" fill="#a0a0a0"/><rect x="1" y="1" width="57" height="43" fill="#000"/><svg x="1" y="1" width="57" height="43" viewBox="1 1 57 43" style="position:static" shape-rendering="crispEdges"><circle cx="29.5" cy="9.2" r="7.2" fill="none" stroke="#00ffff"/><path d="M26.4,5.5 L32.7,5.5" fill="none" stroke="#00ffff"/><path d="M29.5,5.5 L29.5,13.6" fill="none" stroke="#00ffff"/><path d="M29.5,16.5 L29.5,27" fill="none" stroke="#00ffff"/><path d="M13.5,20.3 L45.5,33.7 L45.5,20.3 L13.5,33.7 Z" fill="none" stroke="#00ffff"/><path d="M29.5,27 L23.4,42.2 L35.6,42.2 Z" fill="none" stroke="#00ffff"/></svg></svg>
<div class="t" style="left:145px;top:191px;width:67px;text-align:center;color:#000;overflow:hidden;letter-spacing:0.2px;">Zawór tró...</div>
<div class="a" style="left:216px;top:141px;width:67px;height:65px;border-top:1px solid #fff;border-left:1px solid #fff;border-right:1px solid #696969;border-bottom:1px solid #696969;box-shadow:inset -1px -1px 0 #fff;"></div>
<svg style="left:220px;top:145px" width="59" height="45"><rect x="0" y="0" width="59" height="45" fill="#fff"/><rect x="0" y="0" width="58" height="44" fill="#a0a0a0"/><rect x="1" y="1" width="57" height="43" fill="#000"/><svg x="1" y="1" width="57" height="43" viewBox="1 1 57 43" style="position:static" shape-rendering="crispEdges"><circle cx="29.5" cy="22.5" r="16.4" fill="none" stroke="#00ffff"/><path d="M25.4,6.5 L45.8,22.5 L25.4,38.5 Z" fill="#00ffff" stroke="#00ffff"/><path d="M25,18h1v1h-1z M25,26h1v1h-1zM26,19h1v1h-1z M26,25h1v1h-1zM27,20h1v1h-1z M27,24h1v1h-1zM28,21h1v1h-1z M28,23h1v1h-1zM29,22h1v1h-1z M29,22h1v1h-1zM30,23h1v1h-1z M30,21h1v1h-1zM31,24h1v1h-1z M31,20h1v1h-1zM32,25h1v1h-1z M32,19h1v1h-1zM33,26h1v1h-1z M33,18h1v1h-1z" fill="#ff0000"/></svg></svg>
<div class="t" style="left:216px;top:191px;width:67px;text-align:center;color:#000;overflow:hidden;letter-spacing:0.2px;">Pompa</div>
<div class="a" style="left:287px;top:141px;width:67px;height:65px;border-top:1px solid #fff;border-left:1px solid #fff;border-right:1px solid #696969;border-bottom:1px solid #696969;box-shadow:inset -1px -1px 0 #fff;"></div>
<svg style="left:291px;top:145px" width="59" height="45"><rect x="0" y="0" width="59" height="45" fill="#fff"/><rect x="0" y="0" width="58" height="44" fill="#a0a0a0"/><rect x="1" y="1" width="57" height="43" fill="#000"/><svg x="1" y="1" width="57" height="43" viewBox="1 1 57 43" style="position:static" shape-rendering="crispEdges"><circle cx="29.5" cy="26.5" r="12.2" fill="#00ffff" stroke="#00ffff"/><path d="M29.5,14 L29.5,6.5" fill="none" stroke="#00ffff"/><path d="M19,6.5 L40,6.5" fill="none" stroke="#00ffff"/><path d="M25,22h1v1h-1z M25,30h1v1h-1zM26,23h1v1h-1z M26,29h1v1h-1zM27,24h1v1h-1z M27,28h1v1h-1zM28,25h1v1h-1z M28,27h1v1h-1zM29,26h1v1h-1z M29,26h1v1h-1zM30,27h1v1h-1z M30,25h1v1h-1zM31,28h1v1h-1z M31,24h1v1h-1zM32,29h1v1h-1z M32,23h1v1h-1zM33,30h1v1h-1z M33,22h1v1h-1z" fill="#ff0000"/></svg></svg>
<div class="t" style="left:287px;top:191px;width:67px;text-align:center;color:#000;overflow:hidden;letter-spacing:0.2px;">Kurek</div>
<div class="a" style="left:358px;top:141px;width:67px;height:65px;border-top:1px solid #fff;border-left:1px solid #fff;border-right:1px solid #696969;border-bottom:1px solid #696969;box-shadow:inset -1px -1px 0 #fff;"></div>
<svg style="left:362px;top:145px" width="59" height="45"><rect x="0" y="0" width="59" height="45" fill="#fff"/><rect x="0" y="0" width="58" height="44" fill="#a0a0a0"/><rect x="1" y="1" width="57" height="43" fill="#000"/><svg x="1" y="1" width="57" height="43" viewBox="1 1 57 43" style="position:static" shape-rendering="crispEdges"><path d="M10.5,5.5 L48.5,5.5 L48.5,24.5 L34.5,24.5 L42.7,30.4 L36.6,38 L18.1,24.7 L10.5,24.7 Z" fill="none" stroke="#00ffff"/><path d="M28,12h1v1h-1z M28,18h1v1h-1zM29,13h1v1h-1z M29,17h1v1h-1zM30,14h1v1h-1z M30,16h1v1h-1zM31,15h1v1h-1z M31,15h1v1h-1zM32,16h1v1h-1z M32,14h1v1h-1zM33,17h1v1h-1z M33,13h1v1h-1zM34,18h1v1h-1z M34,12h1v1h-1z" fill="#ff0000"/></svg></svg>
<div class="t" style="left:358px;top:191px;width:67px;text-align:center;color:#000;overflow:hidden;letter-spacing:0.2px;">Filtr</div>
<div class="a" style="left:429px;top:141px;width:67px;height:65px;border-top:1px solid #fff;border-left:1px solid #fff;border-right:1px solid #696969;border-bottom:1px solid #696969;box-shadow:inset -1px -1px 0 #fff;"></div>
<svg style="left:433px;top:145px" width="59" height="45"><rect x="0" y="0" width="59" height="45" fill="#fff"/><rect x="0" y="0" width="58" height="44" fill="#a0a0a0"/><rect x="1" y="1" width="57" height="43" fill="#000"/><svg x="1" y="1" width="57" height="43" viewBox="1 1 57 43" style="position:static" shape-rendering="crispEdges"><path d="M9,15 L9,39 L32,27" fill="none" stroke="#00ffff"/><path d="M9,15.4 L32,27" fill="none" stroke="#00ffff"/><path d="M32,27 L55.5,15.5 L55.5,39 Z" fill="none" stroke="#00ffff"/><circle cx="9" cy="15.4" r="5.5" fill="#00ffff" stroke="#00ffff"/><path d="M9,10 L9,6.5" fill="none" stroke="#00ffff"/><path d="M4.5,6.5 L15,6.5" fill="none" stroke="#00ffff"/><circle cx="32" cy="27" r="5.5" fill="#00ffff" stroke="#00ffff"/><path d="M30,25h1v1h-1z M30,29h1v1h-1zM31,26h1v1h-1z M31,28h1v1h-1zM32,27h1v1h-1z M32,27h1v1h-1zM33,28h1v1h-1z M33,26h1v1h-1zM34,29h1v1h-1z M34,25h1v1h-1z" fill="#ff0000"/></svg></svg>
<div class="t" style="left:429px;top:191px;width:67px;text-align:center;color:#000;overflow:hidden;letter-spacing:0.2px;">Zawór pr...</div>
<div class="a" style="left:500px;top:141px;width:67px;height:65px;border-top:1px solid #fff;border-left:1px solid #fff;border-right:1px solid #696969;border-bottom:1px solid #696969;box-shadow:inset -1px -1px 0 #fff;"></div>
<svg style="left:504px;top:145px" width="59" height="45"><rect x="0" y="0" width="59" height="45" fill="#fff"/><rect x="0" y="0" width="58" height="44" fill="#a0a0a0"/><rect x="1" y="1" width="57" height="43" fill="#000"/><svg x="1" y="1" width="57" height="43" viewBox="1 1 57 43" style="position:static" shape-rendering="crispEdges"><path d="M2.5,16.5 L2.5,28.8" fill="none" stroke="#00ffff"/><path d="M2.5,22.5 L14,22.5" fill="none" stroke="#00ffff"/><circle cx="21.7" cy="22.3" r="7.8" fill="none" stroke="#00ffff"/><path d="M26,19h1v1h-1z M26,25h1v1h-1zM27,20h1v1h-1z M27,24h1v1h-1zM28,21h1v1h-1z M28,23h1v1h-1zM29,22h1v1h-1z M29,22h1v1h-1zM30,23h1v1h-1z M30,21h1v1h-1zM31,24h1v1h-1z M31,20h1v1h-1zM32,25h1v1h-1z M32,19h1v1h-1z" fill="#ff0000"/></svg></svg>
<div class="t" style="left:504px;top:191px;color:#000;letter-spacing:0.2px;">Kurek spustowy</div>
<div class="a" style="left:3px;top:210px;width:67px;height:65px;border-top:1px solid #fff;border-left:1px solid #fff;border-right:1px solid #696969;border-bottom:1px solid #696969;box-shadow:inset -1px -1px 0 #fff;"></div>
<svg style="left:7px;top:214px" width="59" height="45"><rect x="0" y="0" width="59" height="45" fill="#fff"/><rect x="0" y="0" width="58" height="44" fill="#a0a0a0"/><rect x="1" y="1" width="57" height="43" fill="#000"/><svg x="1" y="1" width="57" height="43" viewBox="1 1 57 43" style="position:static" shape-rendering="crispEdges"><path d="M11.5,13.3 L29.5,22 L11.5,30.3 Z" fill="none" stroke="#ffffff"/><path d="M29.5,22 L20.4,39.1 L38.3,39.1 Z" fill="none" stroke="#ffffff"/></svg></svg>
<div class="t" style="left:3px;top:260px;width:67px;text-align:center;color:#000;overflow:hidden;letter-spacing:0.2px;">Zawór ką...</div>
<div class="a" style="left:74px;top:210px;width:67px;height:65px;border-top:1px solid #fff;border-left:1px solid #fff;border-right:1px solid #696969;border-bottom:1px solid #696969;box-shadow:inset -1px -1px 0 #fff;"></div>
<svg style="left:78px;top:214px" width="59" height="45"><rect x="0" y="0" width="59" height="45" fill="#fff"/><rect x="0" y="0" width="58" height="44" fill="#a0a0a0"/><rect x="1" y="1" width="57" height="43" fill="#000"/><svg x="1" y="1" width="57" height="43" viewBox="1 1 57 43" style="position:static" shape-rendering="crispEdges"><path d="M4.199999999999999,9.5 L54.8,35.5 L54.8,9.5 L4.199999999999999,35.5 Z" fill="none" stroke="#00ffff"/><circle cx="29.5" cy="22.5" r="6" fill="#00ffff" stroke="#00ffff"/><path d="M27,20h1v1h-1z M27,24h1v1h-1zM28,21h1v1h-1z M28,23h1v1h-1zM29,22h1v1h-1z M29,22h1v1h-1zM30,23h1v1h-1z M30,21h1v1h-1zM31,24h1v1h-1z M31,20h1v1h-1z" fill="#ff0000"/></svg></svg>
<div class="t" style="left:74px;top:260px;width:67px;text-align:center;color:#000;overflow:hidden;letter-spacing:0.2px;">Zawór od...</div>
<div class="a" style="left:145px;top:210px;width:67px;height:65px;border-top:1px solid #fff;border-left:1px solid #fff;border-right:1px solid #696969;border-bottom:1px solid #696969;box-shadow:inset -1px -1px 0 #fff;"></div>
<svg style="left:149px;top:214px" width="59" height="45"><rect x="0" y="0" width="59" height="45" fill="#fff"/><rect x="0" y="0" width="58" height="44" fill="#a0a0a0"/><rect x="1" y="1" width="57" height="43" fill="#000"/><svg x="1" y="1" width="57" height="43" viewBox="1 1 57 43" style="position:static" shape-rendering="crispEdges"><path d="M23.2,16.6 L46.6,4.3 L46.6,28.2 Z" fill="none" stroke="#00ffff"/><path d="M23.2,16.6 L11.3,40.3 L34.5,40.3 Z" fill="none" stroke="#00ffff"/><circle cx="23.2" cy="16.6" r="5.8" fill="#00ffff" stroke="#00ffff"/><path d="M21,14h1v1h-1z M21,18h1v1h-1zM22,15h1v1h-1z M22,17h1v1h-1zM23,16h1v1h-1z M23,16h1v1h-1zM24,17h1v1h-1z M24,15h1v1h-1zM25,18h1v1h-1z M25,14h1v1h-1z" fill="#ff0000"/></svg></svg>
<div class="t" style="left:145px;top:260px;width:67px;text-align:center;color:#000;overflow:hidden;letter-spacing:0.2px;">Zawór ką...</div>
<div class="a" style="left:216px;top:210px;width:67px;height:65px;border-top:1px solid #fff;border-left:1px solid #fff;border-right:1px solid #696969;border-bottom:1px solid #696969;box-shadow:inset -1px -1px 0 #fff;"></div>
<svg style="left:220px;top:214px" width="59" height="45"><rect x="0" y="0" width="59" height="45" fill="#fff"/><rect x="0" y="0" width="58" height="44" fill="#a0a0a0"/><rect x="1" y="1" width="57" height="43" fill="#000"/><svg x="1" y="1" width="57" height="43" viewBox="1 1 57 43" style="position:static" shape-rendering="crispEdges"><circle cx="29.5" cy="27.5" r="14.5" fill="none" stroke="#00ffff"/><path d="M29.5,13 L29.5,3.5" fill="none" stroke="#00ffff"/><path d="M15.2,3.5 L43.9,3.5" fill="none" stroke="#00ffff"/><path d="M25,23h1v1h-1z M25,31h1v1h-1zM26,24h1v1h-1z M26,30h1v1h-1zM27,25h1v1h-1z M27,29h1v1h-1zM28,26h1v1h-1z M28,28h1v1h-1zM29,27h1v1h-1z M29,27h1v1h-1zM30,28h1v1h-1z M30,26h1v1h-1zM31,29h1v1h-1z M31,25h1v1h-1zM32,30h1v1h-1z M32,24h1v1h-1zM33,31h1v1h-1z M33,23h1v1h-1z" fill="#ff0000"/></svg></svg>
<div class="t" style="left:216px;top:260px;width:67px;text-align:center;color:#000;overflow:hidden;letter-spacing:0.2px;">Zawór kul...</div>
<div class="a" style="left:287px;top:210px;width:67px;height:65px;border-top:1px solid #fff;border-left:1px solid #fff;border-right:1px solid #696969;border-bottom:1px solid #696969;box-shadow:inset -1px -1px 0 #fff;"></div>
<svg style="left:291px;top:214px" width="59" height="45"><rect x="0" y="0" width="59" height="45" fill="#fff"/><rect x="0" y="0" width="58" height="44" fill="#a0a0a0"/><rect x="1" y="1" width="57" height="43" fill="#000"/><svg x="1" y="1" width="57" height="43" viewBox="1 1 57 43" style="position:static" shape-rendering="crispEdges"><path d="M2.1000000000000014,8.4 L56.9,36.6 L56.9,8.4 L2.1000000000000014,36.6 Z" fill="none" stroke="#00ffff"/><path d="M29.5,22.5 L56.9,8.4 L56.9,36.6 Z" fill="#00ffff" stroke="#00ffff"/><path d="M27,20h1v1h-1z M27,24h1v1h-1zM28,21h1v1h-1z M28,23h1v1h-1zM29,22h1v1h-1z M29,22h1v1h-1zM30,23h1v1h-1z M30,21h1v1h-1zM31,24h1v1h-1z M31,20h1v1h-1z" fill="#ff0000"/></svg></svg>
<div class="t" style="left:287px;top:260px;width:67px;text-align:center;color:#000;overflow:hidden;letter-spacing:0.2px;">Zawór pr...</div>
<div class="a" style="left:358px;top:210px;width:67px;height:65px;border-top:1px solid #fff;border-left:1px solid #fff;border-right:1px solid #696969;border-bottom:1px solid #696969;box-shadow:inset -1px -1px 0 #fff;"></div>
<svg style="left:362px;top:214px" width="59" height="45"><rect x="0" y="0" width="59" height="45" fill="#fff"/><rect x="0" y="0" width="58" height="44" fill="#a0a0a0"/><rect x="1" y="1" width="57" height="43" fill="#000"/><svg x="1" y="1" width="57" height="43" viewBox="1 1 57 43" style="position:static" shape-rendering="crispEdges"><path d="M3.5,6.200000000000001 L55.5,33.0 L55.5,6.200000000000001 L3.5,33.0 Z" fill="none" stroke="#00ffff"/><path d="M6,30.5 L29.5,19.5 L39.5,24.5 L12,38.6 Z" fill="#00ffff" stroke="#00ffff"/><path d="M27,17h1v1h-1z M27,21h1v1h-1zM28,18h1v1h-1z M28,20h1v1h-1zM29,19h1v1h-1z M29,19h1v1h-1zM30,20h1v1h-1z M30,18h1v1h-1zM31,21h1v1h-1z M31,17h1v1h-1z" fill="#ff0000"/></svg></svg>
<div class="t" style="left:358px;top:260px;width:67px;text-align:center;color:#000;overflow:hidden;letter-spacing:0.2px;">Filtr siatk...</div>
<div class="a" style="left:429px;top:210px;width:67px;height:65px;border-top:1px solid #fff;border-left:1px solid #fff;border-right:1px solid #696969;border-bottom:1px solid #696969;box-shadow:inset -1px -1px 0 #fff;"></div>
<svg style="left:433px;top:214px" width="59" height="45"><rect x="0" y="0" width="59" height="45" fill="#fff"/><rect x="0" y="0" width="58" height="44" fill="#a0a0a0"/><rect x="1" y="1" width="57" height="43" fill="#000"/><svg x="1" y="1" width="57" height="43" viewBox="1 1 57 43" style="position:static" shape-rendering="crispEdges"><circle cx="8.9" cy="13" r="5.8" fill="#00ffff" stroke="#00ffff"/><path d="M9,13 L9,37.7" fill="none" stroke="#00ffff"/><path d="M8.9,13 L55.3,37.2 L55.3,13" fill="none" stroke="#00ffff"/><path d="M30,23h1v1h-1z M30,27h1v1h-1zM31,24h1v1h-1z M31,26h1v1h-1zM32,25h1v1h-1z M32,25h1v1h-1zM33,26h1v1h-1z M33,24h1v1h-1zM34,27h1v1h-1z M34,23h1v1h-1z" fill="#ff0000"/></svg></svg>
<div class="t" style="left:429px;top:260px;width:67px;text-align:center;color:#000;overflow:hidden;letter-spacing:0.2px;">Zawór pr...</div>
<div class="a" style="left:500px;top:210px;width:67px;height:65px;border-top:1px solid #fff;border-left:1px solid #fff;border-right:1px solid #696969;border-bottom:1px solid #696969;box-shadow:inset -1px -1px 0 #fff;"></div>
<svg style="left:504px;top:214px" width="59" height="45"><rect x="0" y="0" width="59" height="45" fill="#fff"/><rect x="0" y="0" width="58" height="44" fill="#a0a0a0"/><rect x="1" y="1" width="57" height="43" fill="#000"/><svg x="1" y="1" width="57" height="43" viewBox="1 1 57 43" style="position:static" shape-rendering="crispEdges"><path d="M27.5,3.5 L27.5,40" fill="none" stroke="#00ffff"/><circle cx="27.5" cy="22" r="6" fill="none" stroke="#00ffff"/><path d="M25,36 L27.5,41 L30,36 Z" fill="#00ffff" stroke="#00ffff"/><path d="M25,1h1v1h-1z M25,5h1v1h-1zM26,2h1v1h-1z M26,4h1v1h-1zM27,3h1v1h-1z M27,3h1v1h-1zM28,4h1v1h-1z M28,2h1v1h-1zM29,5h1v1h-1z M29,1h1v1h-1z" fill="#ff0000"/></svg></svg>
<div class="t" style="left:504px;top:260px;color:#000;letter-spacing:0.2px;">Zawór zwrotny</div>
<div class="a" style="left:3px;top:279px;width:67px;height:65px;border-top:1px solid #fff;border-left:1px solid #fff;border-right:1px solid #696969;border-bottom:1px solid #696969;box-shadow:inset -1px -1px 0 #fff;"></div>
<svg style="left:7px;top:283px" width="59" height="45"><rect x="0" y="0" width="59" height="45" fill="#fff"/><rect x="0" y="0" width="58" height="44" fill="#a0a0a0"/><rect x="1" y="1" width="57" height="43" fill="#000"/><svg x="1" y="1" width="57" height="43" viewBox="1 1 57 43" style="position:static" shape-rendering="crispEdges"><path d="M12.0,13.5 L47.0,30.5 L47.0,13.5 L12.0,30.5 Z" fill="none" stroke="#ffffff"/><path d="M29.5,22 L20.4,39.1 L38.3,39.1 Z" fill="none" stroke="#ffffff"/></svg></svg>
<div class="t" style="left:3px;top:329px;width:67px;text-align:center;color:#000;overflow:hidden;letter-spacing:0.2px;">Zawór tró...</div>
<div class="a" style="left:74px;top:279px;width:67px;height:65px;border-top:1px solid #fff;border-left:1px solid #fff;border-right:1px solid #696969;border-bottom:1px solid #696969;box-shadow:inset -1px -1px 0 #fff;"></div>
<svg style="left:78px;top:283px" width="59" height="45"><rect x="0" y="0" width="59" height="45" fill="#fff"/><rect x="0" y="0" width="58" height="44" fill="#a0a0a0"/><rect x="1" y="1" width="57" height="43" fill="#000"/><svg x="1" y="1" width="57" height="43" viewBox="1 1 57 43" style="position:static" shape-rendering="crispEdges"><path d="M12.0,13.5 L47.0,30.5 L47.0,13.5 L12.0,30.5 Z" fill="none" stroke="#00ffff"/><path d="M20.5,4.5 L38.5,40.5 L20.5,40.5 L38.5,4.5 Z" fill="none" stroke="#00ffff"/><circle cx="29.5" cy="22" r="4" fill="#00ffff" stroke="#00ffff"/><path d="M27,20h1v1h-1z M27,24h1v1h-1zM28,21h1v1h-1z M28,23h1v1h-1zM29,22h1v1h-1z M29,22h1v1h-1zM30,23h1v1h-1z M30,21h1v1h-1zM31,24h1v1h-1z M31,20h1v1h-1z" fill="#ff0000"/></svg></svg>
<div class="t" style="left:74px;top:329px;width:67px;text-align:center;color:#000;overflow:hidden;letter-spacing:0.2px;">Zawór czt...</div>
<div class="a" style="left:145px;top:279px;width:67px;height:65px;border-top:1px solid #fff;border-left:1px solid #fff;border-right:1px solid #696969;border-bottom:1px solid #696969;box-shadow:inset -1px -1px 0 #fff;"></div>
<svg style="left:149px;top:283px" width="59" height="45"><rect x="0" y="0" width="59" height="45" fill="#fff"/><rect x="0" y="0" width="58" height="44" fill="#a0a0a0"/><rect x="1" y="1" width="57" height="43" fill="#000"/><svg x="1" y="1" width="57" height="43" viewBox="1 1 57 43" style="position:static" shape-rendering="crispEdges"><path d="M3.5,9.5 L51.5,36.5 L51.5,9.5 L3.5,36.5 Z" fill="none" stroke="#00ffff"/><rect x="51" y="9" width="2" height="28" fill="#00ffff"/><path d="M55.5,9.5 L55.5,36.5" fill="none" stroke="#00ffff"/><path d="M53,9.5 L55.5,9.5" fill="none" stroke="#00ffff"/><path d="M53,36.5 L55.5,36.5" fill="none" stroke="#00ffff"/><circle cx="29.5" cy="22.5" r="6.5" fill="#00ffff" stroke="#00ffff"/><path d="M27,20h1v1h-1z M27,24h1v1h-1zM28,21h1v1h-1z M28,23h1v1h-1zM29,22h1v1h-1z M29,22h1v1h-1zM30,23h1v1h-1z M30,21h1v1h-1zM31,24h1v1h-1z M31,20h1v1h-1z" fill="#ff0000"/></svg></svg>
<div class="t" style="left:145px;top:329px;width:67px;text-align:center;color:#000;overflow:hidden;letter-spacing:0.2px;">Zawór be...</div>
<div class="a" style="left:216px;top:279px;width:67px;height:65px;border-top:1px solid #fff;border-left:1px solid #fff;border-right:1px solid #696969;border-bottom:1px solid #696969;box-shadow:inset -1px -1px 0 #fff;"></div>
<svg style="left:220px;top:283px" width="59" height="45"><rect x="0" y="0" width="59" height="45" fill="#fff"/><rect x="0" y="0" width="58" height="44" fill="#a0a0a0"/><rect x="1" y="1" width="57" height="43" fill="#000"/><svg x="1" y="1" width="57" height="43" viewBox="1 1 57 43" style="position:static" shape-rendering="crispEdges"><circle cx="29.5" cy="27.5" r="14.5" fill="none" stroke="#00ffff"/><path d="M29.5,13 L29.5,3.5" fill="none" stroke="#00ffff"/><path d="M15.2,3.5 L43.9,3.5" fill="none" stroke="#00ffff"/><path d="M15.5,13.5 L15.5,42" fill="none" stroke="#00ffff"/><path d="M43.5,13.5 L43.5,42" fill="none" stroke="#00ffff"/><path d="M25,23h1v1h-1z M25,31h1v1h-1zM26,24h1v1h-1z M26,30h1v1h-1zM27,25h1v1h-1z M27,29h1v1h-1zM28,26h1v1h-1z M28,28h1v1h-1zM29,27h1v1h-1z M29,27h1v1h-1zM30,28h1v1h-1z M30,26h1v1h-1zM31,29h1v1h-1z M31,25h1v1h-1zM32,30h1v1h-1z M32,24h1v1h-1zM33,31h1v1h-1z M33,23h1v1h-1z" fill="#ff0000"/></svg></svg>
<div class="t" style="left:216px;top:329px;width:67px;text-align:center;color:#000;overflow:hidden;letter-spacing:0.2px;">Zawór kul...</div>
<div class="a" style="left:287px;top:279px;width:67px;height:65px;border-top:1px solid #fff;border-left:1px solid #fff;border-right:1px solid #696969;border-bottom:1px solid #696969;box-shadow:inset -1px -1px 0 #fff;"></div>
<svg style="left:291px;top:283px" width="59" height="45"><rect x="0" y="0" width="59" height="45" fill="#fff"/><rect x="0" y="0" width="58" height="44" fill="#a0a0a0"/><rect x="1" y="1" width="57" height="43" fill="#000"/><svg x="1" y="1" width="57" height="43" viewBox="1 1 57 43" style="position:static" shape-rendering="crispEdges"><path d="M6.300000000000001,4.699999999999999 L54.3,29.3 L54.3,4.699999999999999 L6.300000000000001,29.3 Z" fill="none" stroke="#00ffff"/><path d="M30.3,17 L54.5,4.7 L54.5,29.3 Z" fill="#00ffff" stroke="#00ffff"/><path d="M6.3,29.3 L6.3,40.8" fill="none" stroke="#00ffff"/><path d="M2.5,36.5 L10.5,36.5" fill="none" stroke="#00ffff"/><path d="M28,15h1v1h-1z M28,19h1v1h-1zM29,16h1v1h-1z M29,18h1v1h-1zM30,17h1v1h-1z M30,17h1v1h-1zM31,18h1v1h-1z M31,16h1v1h-1zM32,19h1v1h-1z M32,15h1v1h-1z" fill="#ff0000"/></svg></svg>
<div class="t" style="left:287px;top:329px;width:67px;text-align:center;color:#000;overflow:hidden;letter-spacing:0.2px;">Zawór zw...</div>
<div class="a" style="left:358px;top:279px;width:67px;height:65px;border-top:1px solid #fff;border-left:1px solid #fff;border-right:1px solid #696969;border-bottom:1px solid #696969;box-shadow:inset -1px -1px 0 #fff;"></div>
<svg style="left:362px;top:283px" width="59" height="45"><rect x="0" y="0" width="59" height="45" fill="#fff"/><rect x="0" y="0" width="58" height="44" fill="#a0a0a0"/><rect x="1" y="1" width="57" height="43" fill="#000"/><svg x="1" y="1" width="57" height="43" viewBox="1 1 57 43" style="position:static" shape-rendering="crispEdges"><path d="M2.5,6.300000000000001 L56.5,32.7 L56.5,6.300000000000001 L2.5,32.7 Z" fill="none" stroke="#00ffff"/><path d="M6.6,31 L10.7,38 L39.8,24.5" fill="none" stroke="#00ffff"/><path d="M27,17h1v1h-1z M27,21h1v1h-1zM28,18h1v1h-1z M28,20h1v1h-1zM29,19h1v1h-1z M29,19h1v1h-1zM30,20h1v1h-1z M30,18h1v1h-1zM31,21h1v1h-1z M31,17h1v1h-1z" fill="#ff0000"/></svg></svg>
<div class="t" style="left:358px;top:329px;width:67px;text-align:center;color:#000;overflow:hidden;letter-spacing:0.2px;">Filtr siatk...</div>
<div class="a" style="left:429px;top:279px;width:67px;height:65px;border-top:1px solid #fff;border-left:1px solid #fff;border-right:1px solid #696969;border-bottom:1px solid #696969;box-shadow:inset -1px -1px 0 #fff;"></div>
<svg style="left:433px;top:283px" width="59" height="45"><rect x="0" y="0" width="59" height="45" fill="#fff"/><rect x="0" y="0" width="58" height="44" fill="#a0a0a0"/><rect x="1" y="1" width="57" height="43" fill="#000"/><svg x="1" y="1" width="57" height="43" viewBox="1 1 57 43" style="position:static" shape-rendering="crispEdges"><path d="M12.5,17.9 L46.5,35.1 L46.5,17.9 L12.5,35.1 Z" fill="none" stroke="#00ffff"/><path d="M29.5,26.5 L29.5,9.5" fill="none" stroke="#00ffff"/><path d="M20.2,9.5 L37.7,9.5" fill="none" stroke="#00ffff"/><path d="M25,22h1v1h-1z M25,30h1v1h-1zM26,23h1v1h-1z M26,29h1v1h-1zM27,24h1v1h-1z M27,28h1v1h-1zM28,25h1v1h-1z M28,27h1v1h-1zM29,26h1v1h-1z M29,26h1v1h-1zM30,27h1v1h-1z M30,25h1v1h-1zM31,28h1v1h-1z M31,24h1v1h-1zM32,29h1v1h-1z M32,23h1v1h-1zM33,30h1v1h-1z M33,22h1v1h-1z" fill="#ff0000"/></svg></svg>
<div class="t" style="left:429px;top:329px;width:67px;text-align:center;color:#000;overflow:hidden;letter-spacing:0.2px;">Zawór re...</div>
<div class="a" style="left:500px;top:279px;width:67px;height:65px;border-top:1px solid #fff;border-left:1px solid #fff;border-right:1px solid #696969;border-bottom:1px solid #696969;box-shadow:inset -1px -1px 0 #fff;"></div>
<svg style="left:504px;top:283px" width="59" height="45"><rect x="0" y="0" width="59" height="45" fill="#fff"/><rect x="0" y="0" width="58" height="44" fill="#a0a0a0"/><rect x="1" y="1" width="57" height="43" fill="#000"/><svg x="1" y="1" width="57" height="43" viewBox="1 1 57 43" style="position:static" shape-rendering="crispEdges"><path d="M3.400000000000002,17.4 L31.8,27.4 L31.8,17.4 L3.400000000000002,27.4 Z" fill="none" stroke="#00ffff"/><circle cx="17.6" cy="22.4" r="6" fill="#00ffff" stroke="#00ffff"/><path d="M24,20 L33,17.5" fill="none" stroke="#00ffff"/><path d="M24,25 L33,27.5" fill="none" stroke="#00ffff"/><path d="M26,19h1v1h-1z M26,25h1v1h-1zM27,20h1v1h-1z M27,24h1v1h-1zM28,21h1v1h-1z M28,23h1v1h-1zM29,22h1v1h-1z M29,22h1v1h-1zM30,23h1v1h-1z M30,21h1v1h-1zM31,24h1v1h-1z M31,20h1v1h-1zM32,25h1v1h-1z M32,19h1v1h-1z" fill="#ff0000"/></svg></svg>
<div class="t" style="left:504px;top:329px;color:#000;letter-spacing:0.2px;">Reduktor</div>
</div>
<div class="a" style="left:320px;top:429px;width:537px;height:17px;background:#f0f0f0;"></div>
<div class="a" style="left:320px;top:428px;width:536px;height:1px;background:#fff;"></div>
<div class="a" style="left:338px;top:429px;width:92px;height:15px;background:#cdcdcd;"></div>
<svg style="left:325px;top:432px" width="7" height="10"><path d="M6,1.6 L2.3,5 L6,8.4" stroke="#606060" stroke-width="2" fill="none"/></svg>
<svg style="left:845px;top:432px" width="7" height="10"><path d="M1,1.6 L4.7,5 L1,8.4" stroke="#606060" stroke-width="2" fill="none"/></svg>
<svg style="left:9px;top:453px" width="13" height="13"><rect x="0.5" y="0.5" width="12" height="12" fill="#fff" stroke="#333"/></svg>
<div class="t" style="left:25px;top:454px;">Sortuj</div>
<svg style="left:133px;top:453px" width="13" height="13"><rect x="0.5" y="0.5" width="12" height="12" fill="#fff" stroke="#333"/></svg>
<div class="t" style="left:148px;top:454px;">Normy</div>
<svg style="left:9px;top:474px" width="13" height="13"><rect x="0.5" y="0.5" width="12" height="12" fill="#fff" stroke="#333"/><path d="M2.3,6.4 L5,9.1 L10.8,3.3" fill="none" stroke="#333" stroke-width="1.4"/></svg>
<div class="t" style="left:24px;top:475px;letter-spacing:-0.05px;">Oddzielna kategoria *Użytkownika*</div>
<div class="a" style="left:4px;top:491px;width:303px;height:231px;border-top:1px solid #fff;border-left:1px solid #fff;border-right:1px solid #a0a0a0;border-bottom:1px solid #a0a0a0;"></div>
<div class="a" style="left:126px;top:491px;width:57px;height:92px;border-top:1px solid #fff;border-left:1px solid #fff;border-right:1px solid #a0a0a0;border-bottom:1px solid #a0a0a0;"></div>
<div class="a" style="left:16px;top:583px;width:43px;height:115px;border-top:1px solid #fff;border-left:1px solid #fff;border-right:1px solid #a0a0a0;border-bottom:1px solid #a0a0a0;"></div>
<div class="a" style="left:59px;top:583px;width:191px;height:115px;border-top:1px solid #fff;border-left:1px solid #fff;border-right:1px solid #a0a0a0;border-bottom:1px solid #a0a0a0;"></div>
<div class="a" style="left:250px;top:583px;width:44px;height:115px;border-top:1px solid #fff;border-left:1px solid #fff;border-right:1px solid #a0a0a0;border-bottom:1px solid #a0a0a0;"></div>
<svg style="left:0;top:0" width="868" height="729"><path d="M88.5,608.5 L218.5,673.5 L218.5,608.5 L88.5,673.5 Z" fill="none" stroke="#000" stroke-width="1"/><path d="M147.5,634.5 L159.5,646.5 M159.5,634.5 L147.5,646.5" stroke="#ff0000" stroke-width="1"/></svg>
<div class="t" style="left:5px;top:707px;width:300px;text-align:center;">Zawór odcinający</div>
<div class="a" style="left:312px;top:461px;width:147px;height:87px;border:1px solid #dcdcdc;"></div><div class="t" style="left:318px;top:456px;padding:0 2px;background:#f0f0f0;">Kąt</div>
<svg style="left:319px;top:479px" width="13" height="13"><circle cx="6.5" cy="6.5" r="6" fill="#fff" stroke="#333"/></svg>
<div class="t" style="left:334px;top:479px;">Obrót</div>
<svg style="left:319px;top:513px" width="13" height="13"><circle cx="6.5" cy="6.5" r="6" fill="#fff" stroke="#333"/><circle cx="6.5" cy="6.5" r="3.3" fill="#333"/></svg>
<div class="t" style="left:334px;top:513px;">Kąt:</div>
<div class="a" style="left:409px;top:514px;width:42px;height:23px;border:1px solid #7a7a7a;background:#fff;"></div>
<div class="t" style="left:415px;top:518px;">0</div>
<svg style="left:436px;top:482px" width="16" height="20"><path d="M1.5,2.5 L5.5,6.5 M5.5,2.5 L1.5,6.5" stroke="#a02020"/><path d="M4.5,4.5 L4.5,15.5 L7,13 L9,17.5 L11,17 L9.5,12.5 L13,12.5 Z" fill="#fff" stroke="#000" stroke-width="1"/></svg>
<div class="a" style="left:312px;top:562px;width:147px;height:107px;border:1px solid #dcdcdc;"></div><div class="t" style="left:318px;top:557px;padding:0 2px;background:#f0f0f0;letter-spacing:-0.2px;">Lustro i izometria</div>
<svg style="left:321px;top:582px" width="13" height="13"><rect x="0.5" y="0.5" width="12" height="12" fill="#fff" stroke="#333"/></svg>
<div class="t" style="left:336px;top:582px;letter-spacing:-0.2px;">Lustro X</div>
<svg style="left:321px;top:610px" width="13" height="13"><rect x="0.5" y="0.5" width="12" height="12" fill="#fff" stroke="#333"/></svg>
<div class="t" style="left:336px;top:610px;letter-spacing:-0.2px;">Lustro Y</div>
<svg style="left:321px;top:638px" width="13" height="13"><rect x="0.5" y="0.5" width="12" height="12" fill="#fff" stroke="#333"/></svg>
<div class="t" style="left:336px;top:638px;letter-spacing:-0.2px;">Izometria</div>
<div class="t" style="left:315px;top:697px;letter-spacing:-0.1px;">Aktualna jednostka: milimetry</div>
<div class="a" style="left:462px;top:461px;width:156px;height:86px;border:1px solid #dcdcdc;"></div><div class="t" style="left:469px;top:455px;padding:0 2px;background:#f0f0f0;letter-spacing:-0.35px;">Wielkość symboli</div>
<div class="t" style="left:469px;top:477px;letter-spacing:-0.3px;">Skala:</div>
<div class="a" style="left:555px;top:473px;width:32px;height:20px;border:1px solid #7a7a7a;background:#fff;"></div>
<div class="t" style="left:561px;top:477px;">2</div>
<svg style="left:595px;top:474px" width="20" height="20"><rect x="0.5" y="2.5" width="9" height="8" fill="none" stroke="#a01818"/><path d="M8.5,3.5 L8.5,14.5 L11,12 L13,16.5 L14.5,16 L12.5,11.5 L16,11.5 Z" fill="#fff" stroke="#000" stroke-width="0.9"/></svg>
<div class="t" style="left:468px;top:575px;">DN</div>
<div class="a" style="left:525px;top:572px;width:87px;height:21px;border:1px solid #7a7a7a;background:#fff;"></div>
<svg style="left:598px;top:580px" width="10" height="6"><path d="M0.5,0.5 L4.5,4.5 L8.5,0.5" fill="none" stroke="#404040" stroke-width="1.2"/></svg>
<div class="t" style="left:468px;top:604px;">PN</div>
<div class="a" style="left:525px;top:601px;width:87px;height:21px;border:1px solid #7a7a7a;background:#fff;"></div>
<svg style="left:598px;top:609px" width="10" height="6"><path d="M0.5,0.5 L4.5,4.5 L8.5,0.5" fill="none" stroke="#404040" stroke-width="1.2"/></svg>
<svg style="left:630px;top:464px" width="13" height="13"><rect x="0.5" y="0.5" width="12" height="12" fill="#fff" stroke="#333"/><path d="M2.3,6.4 L5,9.1 L10.8,3.3" fill="none" stroke="#333" stroke-width="1.4"/></svg>
<div class="t" style="left:646px;top:465px;letter-spacing:-0.2px;">System</div>
<div class="a" style="left:630px;top:484px;width:228px;height:21px;background:#fff;border-top:1px solid #a0a0a0;border-left:1px solid #a0a0a0;border-right:1px solid #fff;border-bottom:1px solid #fff;box-shadow:inset 1px 1px 0 #696969, inset -1px -1px 0 #e3e3e3;"></div>
<div class="a" style="left:634px;top:488px;width:14px;height:14px;background:#ff0040;border:1px solid #000;"></div>
<div class="t" style="left:650px;top:489px;letter-spacing:-0.3px;">Zasilanie</div>
<svg style="left:842px;top:487px" width="13" height="14"><defs><linearGradient id="ddg" x1="0" y1="0" x2="0" y2="1"><stop offset="0" stop-color="#dbe6fb"/><stop offset="1" stop-color="#aec8f5"/></linearGradient></defs><rect x="0.5" y="0.5" width="12" height="13" rx="1.5" fill="url(#ddg)" stroke="#b9cdf0"/><path d="M3,5 L6.5,8.5 L10,5" fill="none" stroke="#4d6185" stroke-width="1.8"/></svg>
<svg style="left:707px;top:521px" width="13" height="13"><rect x="0.5" y="0.5" width="12" height="12" fill="#fff" stroke="#333"/><path d="M2.3,6.4 L5,9.1 L10.8,3.3" fill="none" stroke="#333" stroke-width="1.4"/></svg>
<div class="t" style="left:722px;top:522px;letter-spacing:-0.2px;">Pamiętaj dane</div>
<div class="t" style="left:627px;top:547px;letter-spacing:-0.3px;">Oznaczenie</div>
<div class="a" style="left:707px;top:543px;width:150px;height:21px;border:1px solid #bfbfbf;background:#cccccc;"></div>
<svg style="left:843px;top:551px" width="10" height="6"><path d="M0.5,0.5 L4.5,4.5 L8.5,0.5" fill="none" stroke="#a8a8a8" stroke-width="1.2"/></svg>
<div class="t" style="left:627px;top:575px;">Typ</div>
<div class="a" style="left:707px;top:572px;width:150px;height:21px;border:1px solid #7a7a7a;background:#fff;"></div>
<div class="t" style="left:627px;top:604px;">Producent</div>
<div class="a" style="left:707px;top:601px;width:150px;height:21px;border:1px solid #7a7a7a;background:#fff;"></div>
<div class="t" style="left:627px;top:631px;">Nr katalogowy</div>
<div class="a" style="left:707px;top:627px;width:150px;height:21px;border:1px solid #7a7a7a;background:#fff;"></div>
<svg style="left:711px;top:665px" width="13" height="13"><rect x="0.5" y="0.5" width="12" height="12" fill="#fff" stroke="#333"/></svg>
<div class="t" style="left:727px;top:666px;letter-spacing:-0.1px;">Wstaw wielokrotnie</div>
<div class="a" style="left:703px;top:683px;width:121px;height:34px;background:#f0f0f0;border:1px solid #000;box-shadow:inset 1px 1px 0 #fff, inset -1px -1px 0 #a0a0a0;"></div>
<svg style="left:712px;top:690px" width="20" height="23"><path d="M2.5,11.5 L6,9.5 L8.5,14 L15,1.5 L18.5,4.5 L8,21.5 L7,21.5 Z" fill="#0a8a0a" stroke="#000" stroke-width="1.1"/><path d="M3.5,11.5 L5.5,10.5 L7,13" stroke="#b0b0b0" fill="none"/><path d="M15.5,2.5 L17.5,4.5" stroke="#b0b0b0"/></svg>
<div class="t" style="left:759px;top:694px;">Wstaw</div>
<div class="a" style="left:826px;top:683px;width:32px;height:34px;background:#f0f0f0;border-top:1px solid #fff;border-left:1px solid #fff;border-right:1px solid #a0a0a0;border-bottom:1px solid #a0a0a0;"></div>
<svg style="left:839px;top:690px" width="4" height="20"><rect x="1" y="3" width="3" height="3" fill="#000"/><rect x="1" y="9" width="3" height="3" fill="#000"/><rect x="1" y="15" width="3" height="3" fill="#000"/></svg>
<svg style="left:855px;top:716px" width="10" height="10"><g fill="#b4b4b4"><rect x="7" y="1" width="2" height="2"/><rect x="4" y="4" width="2" height="2"/><rect x="7" y="4" width="2" height="2"/><rect x="1" y="7" width="2" height="2"/><rect x="4" y="7" width="2" height="2"/><rect x="7" y="7" width="2" height="2"/></g></svg>
<div class="a" style="left:319px;top:41px;width:423px;height:21px;border:1px solid #7a7a7a;background:#fff;"></div>
<svg style="left:729px;top:49px" width="10" height="6"><path d="M0.5,0.5 L4.5,4.5 L8.5,0.5" fill="none" stroke="#404040" stroke-width="1.2"/></svg>
<svg style="left:747px;top:42px" width="17" height="17"><defs><radialGradient id="mgg" cx="0.35" cy="0.35" r="0.7"><stop offset="0" stop-color="#ffffff"/><stop offset="1" stop-color="#7fb0d8"/></radialGradient></defs><path d="M9,9 L15,15" stroke="#b08a30" stroke-width="2.6" stroke-linecap="round"/><circle cx="6.5" cy="6.5" r="5" fill="url(#mgg)" stroke="#5a7fa8" stroke-width="1"/></svg>
<svg style="left:797px;top:44px" width="15" height="15"><circle cx="7.5" cy="7.5" r="6.5" fill="#0008c0" stroke="#000070" stroke-width="0.8"/><text x="7.5" y="11.5" text-anchor="middle" font-family="Liberation Sans" font-weight="bold" font-size="11" fill="#fff">?</text></svg>
<svg style="left:833px;top:44px" width="15" height="15"><circle cx="7.5" cy="7.5" r="6.5" fill="#0008c0" stroke="#000070" stroke-width="0.8"/><path d="M5.5,3.5 L10.5,7.5 L5.5,11.5 Z" fill="#fff"/></svg>
</body></html>
